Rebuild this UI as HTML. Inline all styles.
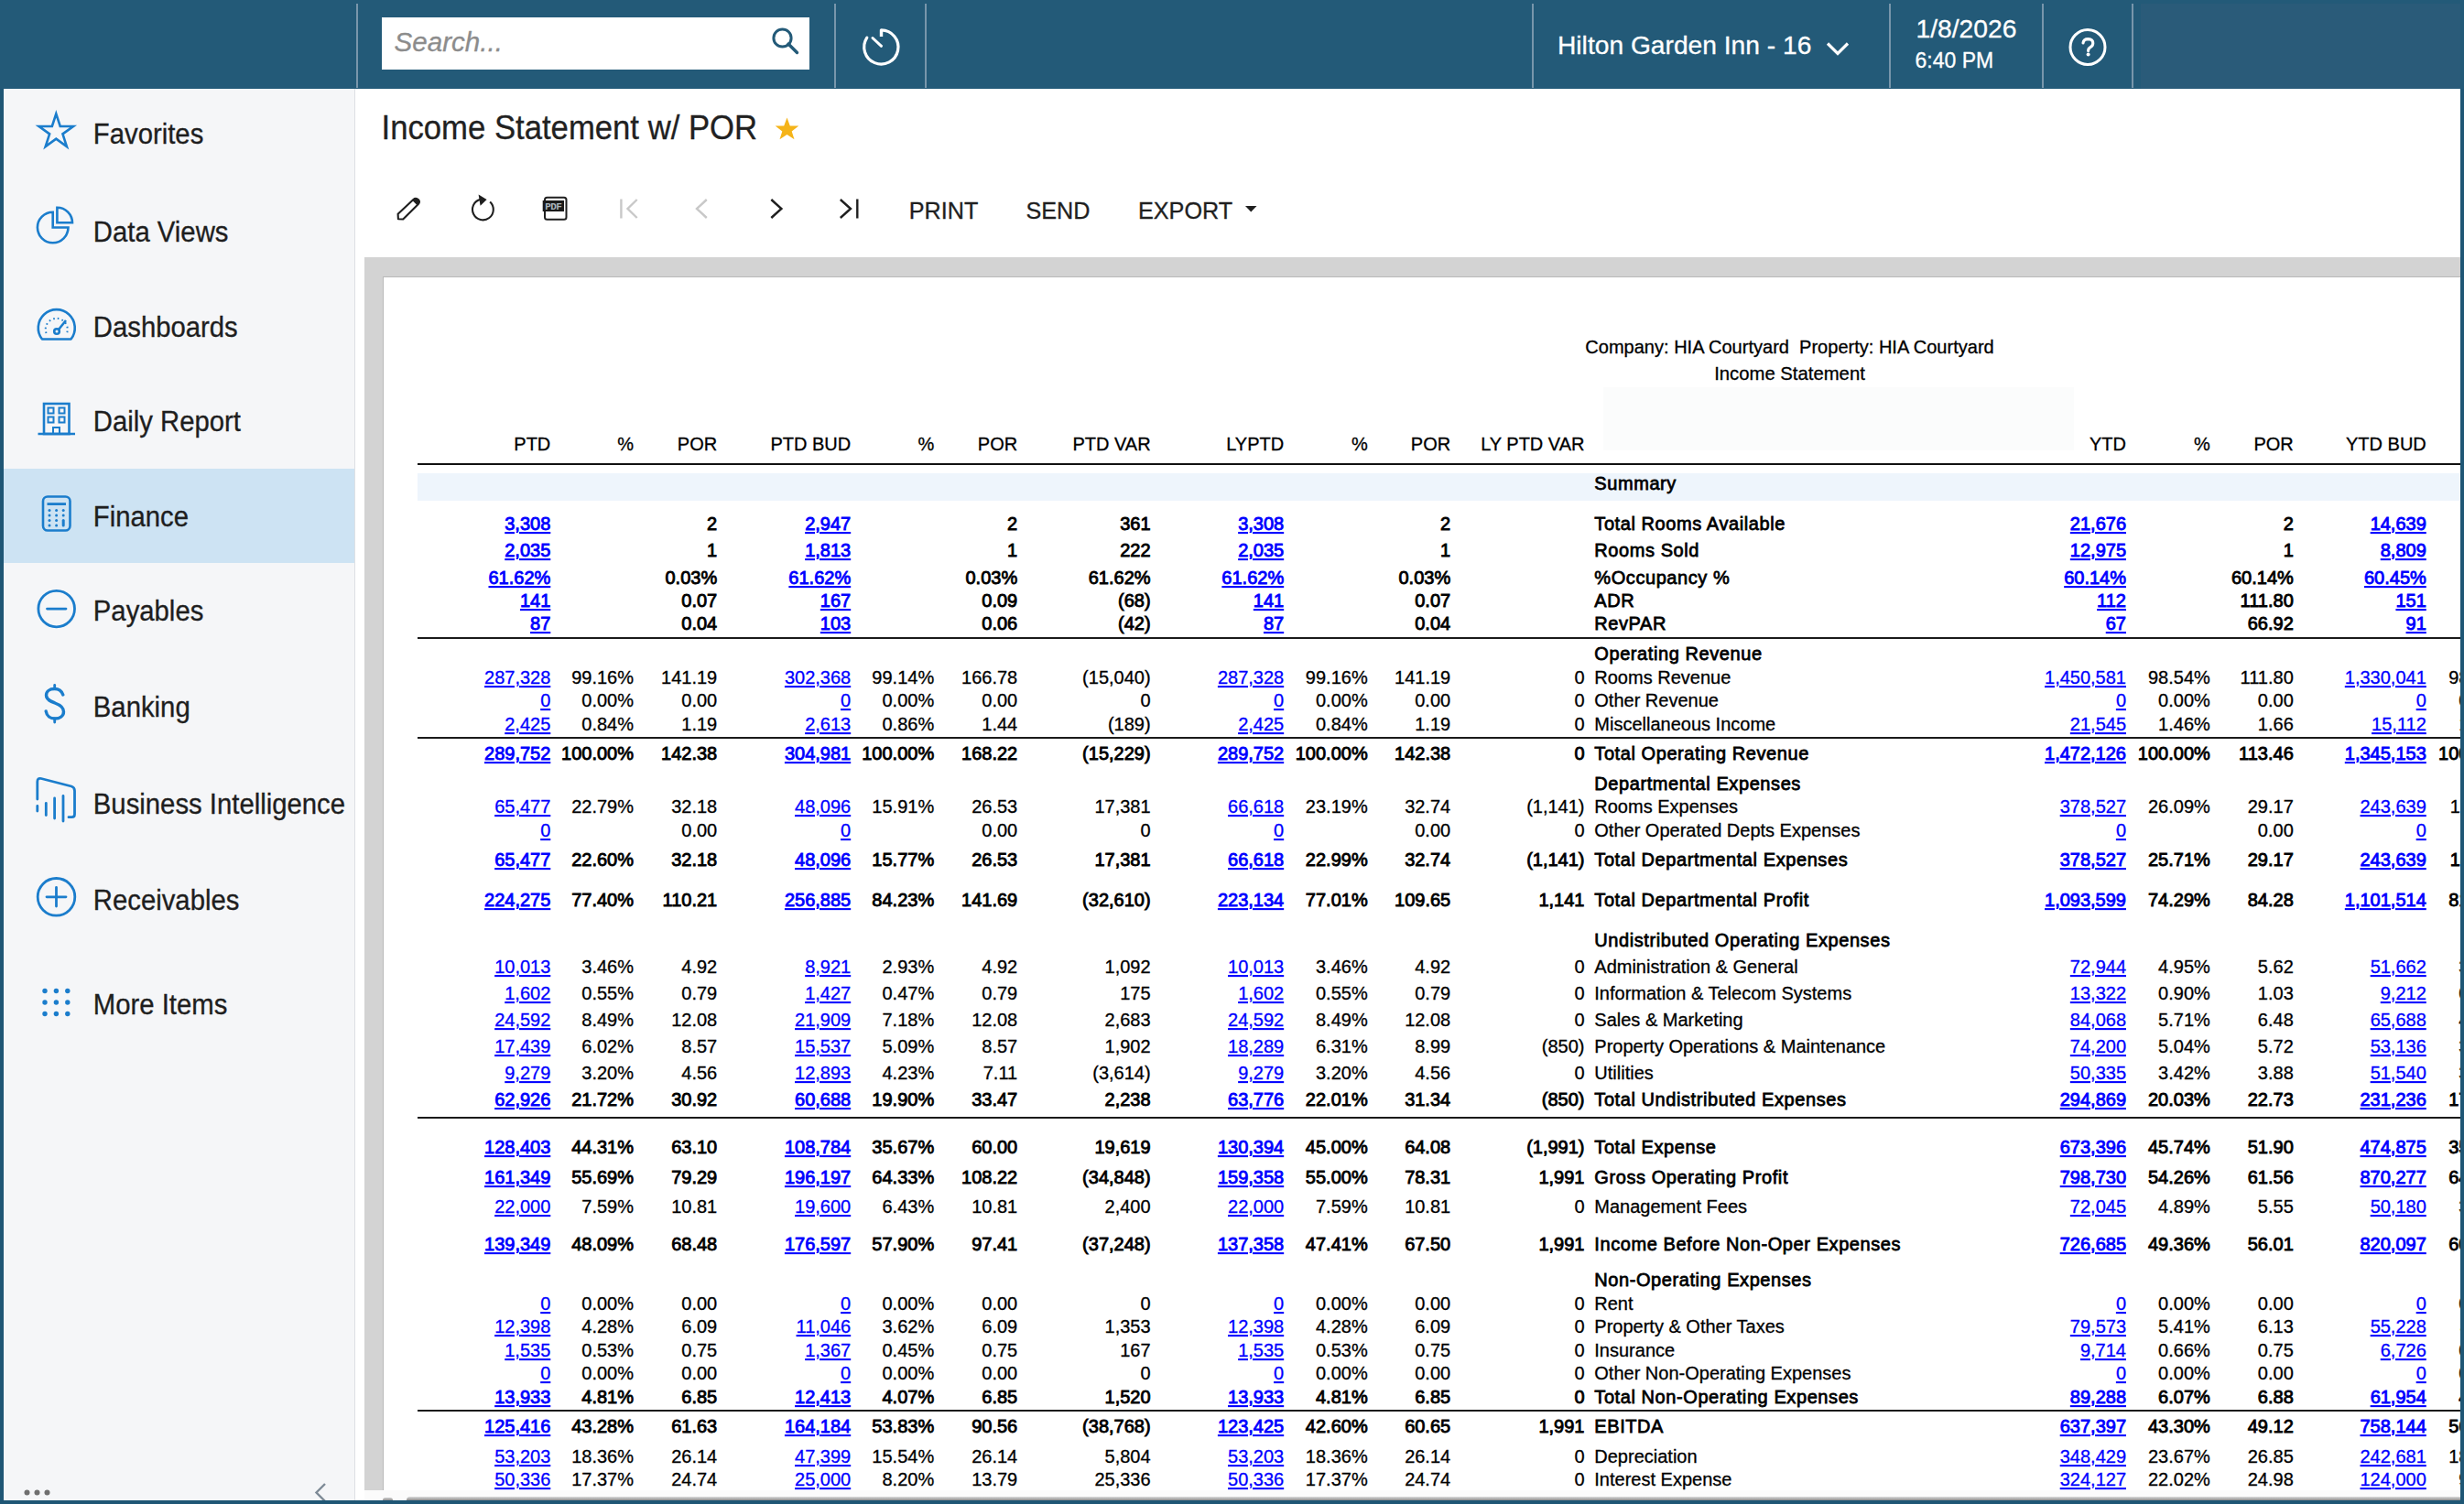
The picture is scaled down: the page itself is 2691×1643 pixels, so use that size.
<!DOCTYPE html><html><head><meta charset="utf-8"><title>Income Statement w/ POR</title><style>*{margin:0;padding:0}
html,body{width:2691px;height:1643px;overflow:hidden;background:#1f5675}
body{position:relative;font-family:"Liberation Sans", sans-serif}
body div, body svg{position:absolute}
body div{line-height:0;white-space:nowrap;-webkit-text-stroke:0.3px currentColor}
.b{-webkit-text-stroke:0}
.sb{font-weight:normal;-webkit-text-stroke:0.85px currentColor}
.sbl{font-weight:normal;-webkit-text-stroke:0.75px currentColor;letter-spacing:0.58px}
u{text-decoration:underline;text-decoration-thickness:1.6px;text-underline-offset:1.5px}
</style></head><body><div style="left:0px;top:0px;width:2691px;height:1643px;background:#1f5675;"></div>
<div style="left:0px;top:0px;width:2691px;height:97px;background:#235a78;"></div>
<div style="left:2338px;top:4px;width:349px;height:93px;background:#2a5b79;"></div>
<div style="left:389px;top:4px;width:2px;height:92px;background:#7896ab;"></div>
<div style="left:911px;top:4px;width:2px;height:92px;background:#7896ab;"></div>
<div style="left:1010px;top:4px;width:2px;height:92px;background:#7896ab;"></div>
<div style="left:1673px;top:4px;width:2px;height:92px;background:#7896ab;"></div>
<div style="left:2063px;top:4px;width:2px;height:92px;background:#7896ab;"></div>
<div style="left:2230px;top:4px;width:2px;height:92px;background:#7896ab;"></div>
<div style="left:2328px;top:4px;width:2px;height:92px;background:#7896ab;"></div>
<div style="left:417px;top:19px;width:467px;height:57px;background:#ffffff;"></div>
<div style="left:430.50px;top:46.24px;font-size:29.6px;color:#8c8c8c;font-style:italic;">Search...</div>
<svg style="left:840px;top:27px" width="36" height="36" viewBox="0 0 36 36"><circle cx="14.5" cy="14.5" r="9.6" fill="none" stroke="#235a78" stroke-width="3"/><line x1="21" y1="21" x2="30.5" y2="30.5" stroke="#235a78" stroke-width="3.4" stroke-linecap="round"/></svg>
<svg style="left:935.5px;top:25px" width="52" height="52" viewBox="0 0 52 52"><path d="M26.5 7.8 A18.6 18.6 0 1 1 10.8 16.2" fill="none" stroke="#ffffff" stroke-width="3.2" stroke-linecap="round"/><line x1="26.5" y1="7.5" x2="26.5" y2="15" stroke="#ffffff" stroke-width="3.4"/><line x1="17" y1="16.5" x2="26.5" y2="25.3" stroke="#ffffff" stroke-width="3" stroke-linecap="round"/></svg>
<div style="left:1701.00px;top:49.43px;font-size:28.2px;color:#ffffff;">Hilton Garden Inn - 16</div>
<svg style="left:1990px;top:40px" width="34" height="26" viewBox="0 0 34 26"><polyline points="6,7.5 17,18.5 28,7.5" fill="none" stroke="#ffffff" stroke-width="3.2"/></svg>
<div style="left:2092.40px;top:31.49px;font-size:28.3px;color:#ffffff;">1/8/2026</div>
<div style="left:2091.50px;top:65.95px;font-size:23px;color:#ffffff;">6:40 PM</div>
<svg style="left:2254px;top:25px" width="52" height="52" viewBox="2254 25 52 52"><circle cx="2280" cy="51.5" r="19" fill="none" stroke="#ffffff" stroke-width="3"/><path d="M2275 47 Q2275.5 42.6 2280.5 42.6 Q2285.8 42.8 2285.8 47.3 Q2285.8 50.2 2282.6 51.8 Q2280.6 52.9 2280.6 55.6" fill="none" stroke="#ffffff" stroke-width="3.1" stroke-linecap="round"/><circle cx="2280.6" cy="59.6" r="2" fill="#ffffff"/></svg>
<div style="left:4px;top:97px;width:383px;height:1542px;background:#f5f6f8;"></div>
<div style="left:387px;top:97px;width:1px;height:1542px;background:#dde0e4;"></div>
<div style="left:4px;top:512px;width:383px;height:103px;background:#cde3f3;"></div>
<div style="left:101.80px;top:146.94px;font-size:29.3px;color:#1e1e1e;transform:scaleY(1.08);transform-origin:0 10.26px;">Favorites</div>
<div style="left:101.80px;top:253.94px;font-size:29.3px;color:#1e1e1e;transform:scaleY(1.08);transform-origin:0 10.26px;">Data Views</div>
<div style="left:101.80px;top:357.75px;font-size:29.3px;color:#1e1e1e;transform:scaleY(1.08);transform-origin:0 10.26px;">Dashboards</div>
<div style="left:101.80px;top:461.05px;font-size:29.3px;color:#1e1e1e;transform:scaleY(1.08);transform-origin:0 10.26px;">Daily Report</div>
<div style="left:101.80px;top:565.14px;font-size:29.3px;color:#1e1e1e;transform:scaleY(1.08);transform-origin:0 10.26px;">Finance</div>
<div style="left:101.80px;top:668.45px;font-size:29.3px;color:#1e1e1e;transform:scaleY(1.08);transform-origin:0 10.26px;">Payables</div>
<div style="left:101.80px;top:773.14px;font-size:29.3px;color:#1e1e1e;transform:scaleY(1.08);transform-origin:0 10.26px;">Banking</div>
<div style="left:101.80px;top:879.14px;font-size:29.3px;color:#1e1e1e;transform:scaleY(1.08);transform-origin:0 10.26px;">Business Intelligence</div>
<div style="left:101.80px;top:983.54px;font-size:29.3px;color:#1e1e1e;transform:scaleY(1.08);transform-origin:0 10.26px;">Receivables</div>
<div style="left:101.80px;top:1098.24px;font-size:29.3px;color:#1e1e1e;transform:scaleY(1.08);transform-origin:0 10.26px;">More Items</div>

<svg style="left:0;top:97px" width="100" height="1050" viewBox="0 97 100 1050">
 <g fill="none" stroke="#1b7dcc" stroke-width="2.6" stroke-linejoin="miter">
  <polygon points="61.3,124.3 65.73,137.94 80.07,137.94 68.47,146.37 72.9,160.0 61.3,151.58 49.7,160.0 54.13,146.37 42.53,137.94 56.87,137.94"/>
  <path d="M57.7 231.7 A16.8 16.8 0 1 0 74.5 248.5 L57.7 248.5 Z"/>
  <path d="M62.4 226.7 A16.6 16.6 0 0 1 79 243.3 L62.4 243.3 Z"/>
  <path d="M46 370.5 A20 20 0 1 1 77.5 370.5 Z" stroke-linejoin="round"/>
  <path d="M50.5 364 A12 12 0 1 1 73 364" stroke-dasharray="1.6 3.2" stroke-width="2"/>
  <circle cx="62" cy="362" r="2.8"/>
  <line x1="64" y1="360" x2="72" y2="350"/>
  <rect x="48" y="441" width="27.5" height="33"/>
  <line x1="41.5" y1="474" x2="82" y2="474"/>
  <rect x="52.5" y="445.5" width="6" height="6" stroke-width="2"/><rect x="64.5" y="445.5" width="6" height="6" stroke-width="2"/>
  <rect x="52.5" y="455.5" width="6" height="6" stroke-width="2"/><rect x="64.5" y="455.5" width="6" height="6" stroke-width="2"/>
  <rect x="58" y="467" width="7" height="7" stroke-width="2"/>
  <rect x="47" y="542.5" width="29.5" height="37" rx="5"/>
 </g>
 <g fill="#1b7dcc">
  <rect x="51.5" y="549.2" width="20.5" height="2.8"/>
  <circle cx="54" cy="557.5" r="1.5"/><circle cx="61.6" cy="557.5" r="1.5"/><circle cx="69.2" cy="557.5" r="1.5"/>
  <circle cx="54" cy="563" r="1.5"/><circle cx="61.6" cy="563" r="1.5"/><circle cx="69.2" cy="563" r="1.5"/>
  <circle cx="54" cy="568.5" r="1.5"/><circle cx="61.6" cy="568.5" r="1.5"/>
  <circle cx="54" cy="574" r="1.5"/><circle cx="61.6" cy="574" r="1.5"/>
  <rect x="67.7" y="567" width="3" height="8.5" rx="1.5"/>
 </g>
 <g fill="none" stroke="#1b7dcc" stroke-width="2.8" stroke-linecap="round">
  <circle cx="61.7" cy="665.1" r="19.8"/>
  <line x1="51.5" y1="665.1" x2="72" y2="665.1"/>
  <path stroke-width="3.4" d="M68.8 759 C67 753.5 62 752.5 59.5 752.5 C54 752.5 50.5 755.5 50.5 759.5 C50.5 764.5 56 766.5 60 768 C65 769.8 69.5 772 69.5 777.5 C69.5 782.5 65 785 60 785 C55 785 51 782 50.2 777"/>
  <line x1="59.7" y1="748.5" x2="59.7" y2="752.5"/><line x1="59.7" y1="785" x2="59.7" y2="789"/>
  <path d="M40.8 873 L40.8 854 Q40.8 849.5 45 850.5 L78 859 Q81.5 860 81.5 864 L81.5 889.5 Q81.5 892.7 78.5 892.7 L75 892.7"/>
  <line x1="40.8" y1="880.5" x2="40.8" y2="886"/>
  <line x1="50.3" y1="877.5" x2="50.3" y2="890.5"/>
  <line x1="59.6" y1="872" x2="59.6" y2="894"/>
  <line x1="69" y1="869.5" x2="69" y2="897"/>
  <circle cx="61.5" cy="979.8" r="20.3"/>
  <line x1="51" y1="979.8" x2="72" y2="979.8"/><line x1="61.5" y1="969.5" x2="61.5" y2="990"/>
 </g>
 <g fill="#1b7dcc">
  <circle cx="49" cy="1082.5" r="2.7"/><circle cx="61.4" cy="1082.5" r="2.7"/><circle cx="73.8" cy="1082.5" r="2.7"/>
  <circle cx="49" cy="1095" r="2.7"/><circle cx="61.4" cy="1095" r="2.7"/><circle cx="73.8" cy="1095" r="2.7"/>
  <circle cx="49" cy="1107.5" r="2.7"/><circle cx="61.4" cy="1107.5" r="2.7"/><circle cx="73.8" cy="1107.5" r="2.7"/>
 </g>
</svg>
<svg style="left:20px;top:1620px" width="345" height="19" viewBox="20 1620 345 19"><g fill="#6f6f6f"><circle cx="29.5" cy="1630.6" r="3"/><circle cx="40.5" cy="1630.6" r="3"/><circle cx="51.5" cy="1630.6" r="3"/></g><polyline points="355,1621 345.5,1630.5 355,1640" fill="none" stroke="#7d8a96" stroke-width="2.4"/></svg>
<div style="left:388px;top:97px;width:2299px;height:1542px;background:#ffffff;"></div>
<div style="left:416.50px;top:139.85px;font-size:34.7px;color:#212121;transform:scaleY(1.05);transform-origin:0 12.15px;">Income Statement w/ POR</div>
<svg style="left:843px;top:124px" width="34" height="32" viewBox="843 124 34 32"><polygon points="859.5,128.5 862.8,137.5 872.3,137.6 864.7,143.4 867.5,152.2 859.5,146.9 851.5,152.2 854.3,143.4 846.7,137.6 856.2,137.5" fill="#f5b419"/></svg>
<svg style="left:420px;top:200px" width="540" height="56" viewBox="420 200 540 56">
 <g fill="none" stroke="#1f1f1f" stroke-width="2.2" stroke-linejoin="round">
  <path d="M434.9 239.2 L434.6 233.7 L451.4 218 Q454.1 215.6 456.7 218.1 Q459.1 220.6 456.8 223.1 L440.2 239.5 Z" stroke-width="2.1"/>
  <path d="M535.17 220.56 A11.4 11.4 0 1 1 524.07 218.0" stroke-width="2.1"/>
  <rect x="595" y="215.7" width="23.5" height="24" rx="2.5" stroke-width="2"/>
 </g>
 <path d="M450.4 219 L452.3 217.1 Q454.5 215.2 457 217.6 Q459.3 220 457.6 222.3 L455.6 224.3 Z" fill="#1f1f1f"/>
 <polygon points="522.6,212.6 531.6,218 524.6,224.8" fill="#1f1f1f"/>
 <rect x="592.7" y="219" width="23.3" height="12" fill="#1a1a1a"/>
 <text x="604.3" y="229.3" font-family="Liberation Mono" font-weight="bold" font-size="11" fill="#a9b4bd" text-anchor="middle" letter-spacing="-0.6">PDF</text>
 <g fill="none" stroke="#c8c8c8" stroke-width="2.4">
  <line x1="678.4" y1="217.5" x2="678.4" y2="238.5"/>
  <polyline points="695.7,218 685.5,228 695.7,238"/>
  <polyline points="771.8,218 761,228 771.8,238"/>
 </g>
 <g fill="none" stroke="#1f1f1f" stroke-width="2.4">
  <polyline points="842.3,218 853.4,228 842.3,238"/>
  <polyline points="917.8,218 929,228 917.8,238"/>
  <line x1="936.3" y1="217.5" x2="936.3" y2="238.5"/>
 </g>
</svg>
<div style="left:992.80px;top:229.78px;font-size:25.2px;color:#1f1f1f;">PRINT</div>
<div style="left:1120.50px;top:229.78px;font-size:25.2px;color:#1f1f1f;">SEND</div>
<div style="left:1243.00px;top:229.78px;font-size:25.2px;color:#1f1f1f;">EXPORT</div>
<svg style="left:1356px;top:220px" width="20" height="16" viewBox="1356 220 20 16"><polygon points="1360,225 1372.5,225 1366.25,231.5" fill="#1f1f1f"/></svg>
<div style="left:398px;top:281px;width:2289px;height:1347px;background:#d3d3d3;"></div>
<div style="left:398px;top:1628px;width:2289px;height:11px;background:#fbfbfb;"></div>
<div style="left:444px;top:1634.5px;width:2243px;height:4.5px;background:linear-gradient(#dcdcdc,#8a8a8a);border-radius:4px 0 0 0;"></div>
<div style="left:418px;top:1636px;width:11px;height:3px;background:linear-gradient(#d0d0d0,#909090);border-radius:5px 5px 0 0;"></div>
<div style="left:418px;top:302px;width:2269px;height:1326px;background:#ffffff;border-left:1px solid #b9b9b9;border-top:1px solid #b9b9b9;box-sizing:border-box;"></div>
<div style="left:419px;top:303px;width:2268px;height:1325px;overflow:hidden;background:transparent">
<div style="left:1332px;top:120px;width:514px;height:69px;background:#fbfcfc;"></div>
<div style="left:735.50px;width:1600px;text-align:center;top:76.48px;font-size:20.05px;color:#000;transform:scaleY(1.035);transform-origin:0 7.02px;">Company: HIA Courtyard&nbsp; Property: HIA Courtyard</div>
<div style="left:735.50px;width:1600px;text-align:center;top:105.20px;font-size:20.3px;color:#000;transform:scaleY(1.035);transform-origin:0 7.10px;">Income Statement</div>
<div style="left:-617.70px;width:800px;text-align:right;top:182.20px;font-size:20.0px;color:#000;transform:scaleY(1.035);transform-origin:0 7.00px;">PTD</div>
<div style="left:-527.00px;width:800px;text-align:right;top:182.20px;font-size:20.0px;color:#000;transform:scaleY(1.035);transform-origin:0 7.00px;">%</div>
<div style="left:-435.80px;width:800px;text-align:right;top:182.20px;font-size:20.0px;color:#000;transform:scaleY(1.035);transform-origin:0 7.00px;">POR</div>
<div style="left:-289.80px;width:800px;text-align:right;top:182.20px;font-size:20.0px;color:#000;transform:scaleY(1.035);transform-origin:0 7.00px;">PTD BUD</div>
<div style="left:-198.80px;width:800px;text-align:right;top:182.20px;font-size:20.0px;color:#000;transform:scaleY(1.035);transform-origin:0 7.00px;">%</div>
<div style="left:-107.80px;width:800px;text-align:right;top:182.20px;font-size:20.0px;color:#000;transform:scaleY(1.035);transform-origin:0 7.00px;">POR</div>
<div style="left:37.60px;width:800px;text-align:right;top:182.20px;font-size:20.0px;color:#000;transform:scaleY(1.035);transform-origin:0 7.00px;">PTD VAR</div>
<div style="left:183.20px;width:800px;text-align:right;top:182.20px;font-size:20.0px;color:#000;transform:scaleY(1.035);transform-origin:0 7.00px;">LYPTD</div>
<div style="left:274.70px;width:800px;text-align:right;top:182.20px;font-size:20.0px;color:#000;transform:scaleY(1.035);transform-origin:0 7.00px;">%</div>
<div style="left:365.20px;width:800px;text-align:right;top:182.20px;font-size:20.0px;color:#000;transform:scaleY(1.035);transform-origin:0 7.00px;">POR</div>
<div style="left:511.50px;width:800px;text-align:right;top:182.20px;font-size:20.0px;color:#000;transform:scaleY(1.035);transform-origin:0 7.00px;">LY PTD VAR</div>
<div style="left:1103.00px;width:800px;text-align:right;top:182.20px;font-size:20.0px;color:#000;transform:scaleY(1.035);transform-origin:0 7.00px;">YTD</div>
<div style="left:1194.80px;width:800px;text-align:right;top:182.20px;font-size:20.0px;color:#000;transform:scaleY(1.035);transform-origin:0 7.00px;">%</div>
<div style="left:1285.80px;width:800px;text-align:right;top:182.20px;font-size:20.0px;color:#000;transform:scaleY(1.035);transform-origin:0 7.00px;">POR</div>
<div style="left:1430.80px;width:800px;text-align:right;top:182.20px;font-size:20.0px;color:#000;transform:scaleY(1.035);transform-origin:0 7.00px;">YTD BUD</div>
<div style="left:1523.00px;width:800px;text-align:right;top:182.20px;font-size:20.0px;color:#000;transform:scaleY(1.035);transform-origin:0 7.00px;">%</div>
<div style="left:36.5px;top:203.3px;width:2232px;height:2px;background:#111;"></div>
<div style="left:36.5px;top:214px;width:2232px;height:29.5px;background:#eef5fc;"></div>
<div class="sbl" style="left:1322.30px;top:224.70px;font-size:20.0px;color:#000;transform:scaleY(1.035);transform-origin:0 6.93px;">Summary</div>
<div class="sb" style="left:-617.70px;width:800px;text-align:right;top:269.00px;font-size:20.0px;color:#0000ff;transform:scaleY(1.035);transform-origin:0 6.93px;"><u>3,308</u></div>
<div class="sb" style="left:-435.80px;width:800px;text-align:right;top:269.00px;font-size:20.0px;color:#000;transform:scaleY(1.035);transform-origin:0 6.93px;">2</div>
<div class="sb" style="left:-289.80px;width:800px;text-align:right;top:269.00px;font-size:20.0px;color:#0000ff;transform:scaleY(1.035);transform-origin:0 6.93px;"><u>2,947</u></div>
<div class="sb" style="left:-107.80px;width:800px;text-align:right;top:269.00px;font-size:20.0px;color:#000;transform:scaleY(1.035);transform-origin:0 6.93px;">2</div>
<div class="sb" style="left:37.60px;width:800px;text-align:right;top:269.00px;font-size:20.0px;color:#000;transform:scaleY(1.035);transform-origin:0 6.93px;">361</div>
<div class="sb" style="left:183.20px;width:800px;text-align:right;top:269.00px;font-size:20.0px;color:#0000ff;transform:scaleY(1.035);transform-origin:0 6.93px;"><u>3,308</u></div>
<div class="sb" style="left:365.20px;width:800px;text-align:right;top:269.00px;font-size:20.0px;color:#000;transform:scaleY(1.035);transform-origin:0 6.93px;">2</div>
<div class="sbl" style="left:1322.30px;top:269.00px;font-size:20.0px;color:#000;transform:scaleY(1.035);transform-origin:0 6.93px;">Total Rooms Available</div>
<div class="sb" style="left:1103.00px;width:800px;text-align:right;top:269.00px;font-size:20.0px;color:#0000ff;transform:scaleY(1.035);transform-origin:0 6.93px;"><u>21,676</u></div>
<div class="sb" style="left:1285.80px;width:800px;text-align:right;top:269.00px;font-size:20.0px;color:#000;transform:scaleY(1.035);transform-origin:0 6.93px;">2</div>
<div class="sb" style="left:1430.80px;width:800px;text-align:right;top:269.00px;font-size:20.0px;color:#0000ff;transform:scaleY(1.035);transform-origin:0 6.93px;"><u>14,639</u></div>
<div class="sb" style="left:-617.70px;width:800px;text-align:right;top:298.40px;font-size:20.0px;color:#0000ff;transform:scaleY(1.035);transform-origin:0 6.93px;"><u>2,035</u></div>
<div class="sb" style="left:-435.80px;width:800px;text-align:right;top:298.40px;font-size:20.0px;color:#000;transform:scaleY(1.035);transform-origin:0 6.93px;">1</div>
<div class="sb" style="left:-289.80px;width:800px;text-align:right;top:298.40px;font-size:20.0px;color:#0000ff;transform:scaleY(1.035);transform-origin:0 6.93px;"><u>1,813</u></div>
<div class="sb" style="left:-107.80px;width:800px;text-align:right;top:298.40px;font-size:20.0px;color:#000;transform:scaleY(1.035);transform-origin:0 6.93px;">1</div>
<div class="sb" style="left:37.60px;width:800px;text-align:right;top:298.40px;font-size:20.0px;color:#000;transform:scaleY(1.035);transform-origin:0 6.93px;">222</div>
<div class="sb" style="left:183.20px;width:800px;text-align:right;top:298.40px;font-size:20.0px;color:#0000ff;transform:scaleY(1.035);transform-origin:0 6.93px;"><u>2,035</u></div>
<div class="sb" style="left:365.20px;width:800px;text-align:right;top:298.40px;font-size:20.0px;color:#000;transform:scaleY(1.035);transform-origin:0 6.93px;">1</div>
<div class="sbl" style="left:1322.30px;top:298.40px;font-size:20.0px;color:#000;transform:scaleY(1.035);transform-origin:0 6.93px;">Rooms Sold</div>
<div class="sb" style="left:1103.00px;width:800px;text-align:right;top:298.40px;font-size:20.0px;color:#0000ff;transform:scaleY(1.035);transform-origin:0 6.93px;"><u>12,975</u></div>
<div class="sb" style="left:1285.80px;width:800px;text-align:right;top:298.40px;font-size:20.0px;color:#000;transform:scaleY(1.035);transform-origin:0 6.93px;">1</div>
<div class="sb" style="left:1430.80px;width:800px;text-align:right;top:298.40px;font-size:20.0px;color:#0000ff;transform:scaleY(1.035);transform-origin:0 6.93px;"><u>8,809</u></div>
<div class="sb" style="left:-617.70px;width:800px;text-align:right;top:327.50px;font-size:20.0px;color:#0000ff;transform:scaleY(1.035);transform-origin:0 6.93px;"><u>61.62%</u></div>
<div class="sb" style="left:-435.80px;width:800px;text-align:right;top:327.50px;font-size:20.0px;color:#000;transform:scaleY(1.035);transform-origin:0 6.93px;">0.03%</div>
<div class="sb" style="left:-289.80px;width:800px;text-align:right;top:327.50px;font-size:20.0px;color:#0000ff;transform:scaleY(1.035);transform-origin:0 6.93px;"><u>61.62%</u></div>
<div class="sb" style="left:-107.80px;width:800px;text-align:right;top:327.50px;font-size:20.0px;color:#000;transform:scaleY(1.035);transform-origin:0 6.93px;">0.03%</div>
<div class="sb" style="left:37.60px;width:800px;text-align:right;top:327.50px;font-size:20.0px;color:#000;transform:scaleY(1.035);transform-origin:0 6.93px;">61.62%</div>
<div class="sb" style="left:183.20px;width:800px;text-align:right;top:327.50px;font-size:20.0px;color:#0000ff;transform:scaleY(1.035);transform-origin:0 6.93px;"><u>61.62%</u></div>
<div class="sb" style="left:365.20px;width:800px;text-align:right;top:327.50px;font-size:20.0px;color:#000;transform:scaleY(1.035);transform-origin:0 6.93px;">0.03%</div>
<div class="sbl" style="left:1322.30px;top:327.50px;font-size:20.0px;color:#000;transform:scaleY(1.035);transform-origin:0 6.93px;">%Occupancy %</div>
<div class="sb" style="left:1103.00px;width:800px;text-align:right;top:327.50px;font-size:20.0px;color:#0000ff;transform:scaleY(1.035);transform-origin:0 6.93px;"><u>60.14%</u></div>
<div class="sb" style="left:1285.80px;width:800px;text-align:right;top:327.50px;font-size:20.0px;color:#000;transform:scaleY(1.035);transform-origin:0 6.93px;">60.14%</div>
<div class="sb" style="left:1430.80px;width:800px;text-align:right;top:327.50px;font-size:20.0px;color:#0000ff;transform:scaleY(1.035);transform-origin:0 6.93px;"><u>60.45%</u></div>
<div class="sb" style="left:-617.70px;width:800px;text-align:right;top:353.00px;font-size:20.0px;color:#0000ff;transform:scaleY(1.035);transform-origin:0 6.93px;"><u>141</u></div>
<div class="sb" style="left:-435.80px;width:800px;text-align:right;top:353.00px;font-size:20.0px;color:#000;transform:scaleY(1.035);transform-origin:0 6.93px;">0.07</div>
<div class="sb" style="left:-289.80px;width:800px;text-align:right;top:353.00px;font-size:20.0px;color:#0000ff;transform:scaleY(1.035);transform-origin:0 6.93px;"><u>167</u></div>
<div class="sb" style="left:-107.80px;width:800px;text-align:right;top:353.00px;font-size:20.0px;color:#000;transform:scaleY(1.035);transform-origin:0 6.93px;">0.09</div>
<div class="sb" style="left:37.60px;width:800px;text-align:right;top:353.00px;font-size:20.0px;color:#000;transform:scaleY(1.035);transform-origin:0 6.93px;">(68)</div>
<div class="sb" style="left:183.20px;width:800px;text-align:right;top:353.00px;font-size:20.0px;color:#0000ff;transform:scaleY(1.035);transform-origin:0 6.93px;"><u>141</u></div>
<div class="sb" style="left:365.20px;width:800px;text-align:right;top:353.00px;font-size:20.0px;color:#000;transform:scaleY(1.035);transform-origin:0 6.93px;">0.07</div>
<div class="sbl" style="left:1322.30px;top:353.00px;font-size:20.0px;color:#000;transform:scaleY(1.035);transform-origin:0 6.93px;">ADR</div>
<div class="sb" style="left:1103.00px;width:800px;text-align:right;top:353.00px;font-size:20.0px;color:#0000ff;transform:scaleY(1.035);transform-origin:0 6.93px;"><u>112</u></div>
<div class="sb" style="left:1285.80px;width:800px;text-align:right;top:353.00px;font-size:20.0px;color:#000;transform:scaleY(1.035);transform-origin:0 6.93px;">111.80</div>
<div class="sb" style="left:1430.80px;width:800px;text-align:right;top:353.00px;font-size:20.0px;color:#0000ff;transform:scaleY(1.035);transform-origin:0 6.93px;"><u>151</u></div>
<div class="sb" style="left:-617.70px;width:800px;text-align:right;top:378.20px;font-size:20.0px;color:#0000ff;transform:scaleY(1.035);transform-origin:0 6.93px;"><u>87</u></div>
<div class="sb" style="left:-435.80px;width:800px;text-align:right;top:378.20px;font-size:20.0px;color:#000;transform:scaleY(1.035);transform-origin:0 6.93px;">0.04</div>
<div class="sb" style="left:-289.80px;width:800px;text-align:right;top:378.20px;font-size:20.0px;color:#0000ff;transform:scaleY(1.035);transform-origin:0 6.93px;"><u>103</u></div>
<div class="sb" style="left:-107.80px;width:800px;text-align:right;top:378.20px;font-size:20.0px;color:#000;transform:scaleY(1.035);transform-origin:0 6.93px;">0.06</div>
<div class="sb" style="left:37.60px;width:800px;text-align:right;top:378.20px;font-size:20.0px;color:#000;transform:scaleY(1.035);transform-origin:0 6.93px;">(42)</div>
<div class="sb" style="left:183.20px;width:800px;text-align:right;top:378.20px;font-size:20.0px;color:#0000ff;transform:scaleY(1.035);transform-origin:0 6.93px;"><u>87</u></div>
<div class="sb" style="left:365.20px;width:800px;text-align:right;top:378.20px;font-size:20.0px;color:#000;transform:scaleY(1.035);transform-origin:0 6.93px;">0.04</div>
<div class="sbl" style="left:1322.30px;top:378.20px;font-size:20.0px;color:#000;transform:scaleY(1.035);transform-origin:0 6.93px;">RevPAR</div>
<div class="sb" style="left:1103.00px;width:800px;text-align:right;top:378.20px;font-size:20.0px;color:#0000ff;transform:scaleY(1.035);transform-origin:0 6.93px;"><u>67</u></div>
<div class="sb" style="left:1285.80px;width:800px;text-align:right;top:378.20px;font-size:20.0px;color:#000;transform:scaleY(1.035);transform-origin:0 6.93px;">66.92</div>
<div class="sb" style="left:1430.80px;width:800px;text-align:right;top:378.20px;font-size:20.0px;color:#0000ff;transform:scaleY(1.035);transform-origin:0 6.93px;"><u>91</u></div>
<div class="sbl" style="left:1322.30px;top:410.70px;font-size:20.0px;color:#000;transform:scaleY(1.035);transform-origin:0 6.93px;">Operating Revenue</div>
<div style="left:-617.70px;width:800px;text-align:right;top:436.50px;font-size:20.0px;color:#0000ff;transform:scaleY(1.035);transform-origin:0 7.00px;"><u>287,328</u></div>
<div style="left:-527.00px;width:800px;text-align:right;top:436.50px;font-size:20.0px;color:#000;transform:scaleY(1.035);transform-origin:0 7.00px;">99.16%</div>
<div style="left:-435.80px;width:800px;text-align:right;top:436.50px;font-size:20.0px;color:#000;transform:scaleY(1.035);transform-origin:0 7.00px;">141.19</div>
<div style="left:-289.80px;width:800px;text-align:right;top:436.50px;font-size:20.0px;color:#0000ff;transform:scaleY(1.035);transform-origin:0 7.00px;"><u>302,368</u></div>
<div style="left:-198.80px;width:800px;text-align:right;top:436.50px;font-size:20.0px;color:#000;transform:scaleY(1.035);transform-origin:0 7.00px;">99.14%</div>
<div style="left:-107.80px;width:800px;text-align:right;top:436.50px;font-size:20.0px;color:#000;transform:scaleY(1.035);transform-origin:0 7.00px;">166.78</div>
<div style="left:37.60px;width:800px;text-align:right;top:436.50px;font-size:20.0px;color:#000;transform:scaleY(1.035);transform-origin:0 7.00px;">(15,040)</div>
<div style="left:183.20px;width:800px;text-align:right;top:436.50px;font-size:20.0px;color:#0000ff;transform:scaleY(1.035);transform-origin:0 7.00px;"><u>287,328</u></div>
<div style="left:274.70px;width:800px;text-align:right;top:436.50px;font-size:20.0px;color:#000;transform:scaleY(1.035);transform-origin:0 7.00px;">99.16%</div>
<div style="left:365.20px;width:800px;text-align:right;top:436.50px;font-size:20.0px;color:#000;transform:scaleY(1.035);transform-origin:0 7.00px;">141.19</div>
<div style="left:511.50px;width:800px;text-align:right;top:436.50px;font-size:20.0px;color:#000;transform:scaleY(1.035);transform-origin:0 7.00px;">0</div>
<div style="left:1322.30px;top:436.50px;font-size:20.0px;color:#000;transform:scaleY(1.035);transform-origin:0 7.00px;">Rooms Revenue</div>
<div style="left:1103.00px;width:800px;text-align:right;top:436.50px;font-size:20.0px;color:#0000ff;transform:scaleY(1.035);transform-origin:0 7.00px;"><u>1,450,581</u></div>
<div style="left:1194.80px;width:800px;text-align:right;top:436.50px;font-size:20.0px;color:#000;transform:scaleY(1.035);transform-origin:0 7.00px;">98.54%</div>
<div style="left:1285.80px;width:800px;text-align:right;top:436.50px;font-size:20.0px;color:#000;transform:scaleY(1.035);transform-origin:0 7.00px;">111.80</div>
<div style="left:1430.80px;width:800px;text-align:right;top:436.50px;font-size:20.0px;color:#0000ff;transform:scaleY(1.035);transform-origin:0 7.00px;"><u>1,330,041</u></div>
<div style="left:1523.00px;width:800px;text-align:right;top:436.50px;font-size:20.0px;color:#000;transform:scaleY(1.035);transform-origin:0 7.00px;">98.88%</div>
<div style="left:-617.70px;width:800px;text-align:right;top:462.00px;font-size:20.0px;color:#0000ff;transform:scaleY(1.035);transform-origin:0 7.00px;"><u>0</u></div>
<div style="left:-527.00px;width:800px;text-align:right;top:462.00px;font-size:20.0px;color:#000;transform:scaleY(1.035);transform-origin:0 7.00px;">0.00%</div>
<div style="left:-435.80px;width:800px;text-align:right;top:462.00px;font-size:20.0px;color:#000;transform:scaleY(1.035);transform-origin:0 7.00px;">0.00</div>
<div style="left:-289.80px;width:800px;text-align:right;top:462.00px;font-size:20.0px;color:#0000ff;transform:scaleY(1.035);transform-origin:0 7.00px;"><u>0</u></div>
<div style="left:-198.80px;width:800px;text-align:right;top:462.00px;font-size:20.0px;color:#000;transform:scaleY(1.035);transform-origin:0 7.00px;">0.00%</div>
<div style="left:-107.80px;width:800px;text-align:right;top:462.00px;font-size:20.0px;color:#000;transform:scaleY(1.035);transform-origin:0 7.00px;">0.00</div>
<div style="left:37.60px;width:800px;text-align:right;top:462.00px;font-size:20.0px;color:#000;transform:scaleY(1.035);transform-origin:0 7.00px;">0</div>
<div style="left:183.20px;width:800px;text-align:right;top:462.00px;font-size:20.0px;color:#0000ff;transform:scaleY(1.035);transform-origin:0 7.00px;"><u>0</u></div>
<div style="left:274.70px;width:800px;text-align:right;top:462.00px;font-size:20.0px;color:#000;transform:scaleY(1.035);transform-origin:0 7.00px;">0.00%</div>
<div style="left:365.20px;width:800px;text-align:right;top:462.00px;font-size:20.0px;color:#000;transform:scaleY(1.035);transform-origin:0 7.00px;">0.00</div>
<div style="left:511.50px;width:800px;text-align:right;top:462.00px;font-size:20.0px;color:#000;transform:scaleY(1.035);transform-origin:0 7.00px;">0</div>
<div style="left:1322.30px;top:462.00px;font-size:20.0px;color:#000;transform:scaleY(1.035);transform-origin:0 7.00px;">Other Revenue</div>
<div style="left:1103.00px;width:800px;text-align:right;top:462.00px;font-size:20.0px;color:#0000ff;transform:scaleY(1.035);transform-origin:0 7.00px;"><u>0</u></div>
<div style="left:1194.80px;width:800px;text-align:right;top:462.00px;font-size:20.0px;color:#000;transform:scaleY(1.035);transform-origin:0 7.00px;">0.00%</div>
<div style="left:1285.80px;width:800px;text-align:right;top:462.00px;font-size:20.0px;color:#000;transform:scaleY(1.035);transform-origin:0 7.00px;">0.00</div>
<div style="left:1430.80px;width:800px;text-align:right;top:462.00px;font-size:20.0px;color:#0000ff;transform:scaleY(1.035);transform-origin:0 7.00px;"><u>0</u></div>
<div style="left:1523.00px;width:800px;text-align:right;top:462.00px;font-size:20.0px;color:#000;transform:scaleY(1.035);transform-origin:0 7.00px;">0.00%</div>
<div style="left:-617.70px;width:800px;text-align:right;top:487.50px;font-size:20.0px;color:#0000ff;transform:scaleY(1.035);transform-origin:0 7.00px;"><u>2,425</u></div>
<div style="left:-527.00px;width:800px;text-align:right;top:487.50px;font-size:20.0px;color:#000;transform:scaleY(1.035);transform-origin:0 7.00px;">0.84%</div>
<div style="left:-435.80px;width:800px;text-align:right;top:487.50px;font-size:20.0px;color:#000;transform:scaleY(1.035);transform-origin:0 7.00px;">1.19</div>
<div style="left:-289.80px;width:800px;text-align:right;top:487.50px;font-size:20.0px;color:#0000ff;transform:scaleY(1.035);transform-origin:0 7.00px;"><u>2,613</u></div>
<div style="left:-198.80px;width:800px;text-align:right;top:487.50px;font-size:20.0px;color:#000;transform:scaleY(1.035);transform-origin:0 7.00px;">0.86%</div>
<div style="left:-107.80px;width:800px;text-align:right;top:487.50px;font-size:20.0px;color:#000;transform:scaleY(1.035);transform-origin:0 7.00px;">1.44</div>
<div style="left:37.60px;width:800px;text-align:right;top:487.50px;font-size:20.0px;color:#000;transform:scaleY(1.035);transform-origin:0 7.00px;">(189)</div>
<div style="left:183.20px;width:800px;text-align:right;top:487.50px;font-size:20.0px;color:#0000ff;transform:scaleY(1.035);transform-origin:0 7.00px;"><u>2,425</u></div>
<div style="left:274.70px;width:800px;text-align:right;top:487.50px;font-size:20.0px;color:#000;transform:scaleY(1.035);transform-origin:0 7.00px;">0.84%</div>
<div style="left:365.20px;width:800px;text-align:right;top:487.50px;font-size:20.0px;color:#000;transform:scaleY(1.035);transform-origin:0 7.00px;">1.19</div>
<div style="left:511.50px;width:800px;text-align:right;top:487.50px;font-size:20.0px;color:#000;transform:scaleY(1.035);transform-origin:0 7.00px;">0</div>
<div style="left:1322.30px;top:487.50px;font-size:20.0px;color:#000;transform:scaleY(1.035);transform-origin:0 7.00px;">Miscellaneous Income</div>
<div style="left:1103.00px;width:800px;text-align:right;top:487.50px;font-size:20.0px;color:#0000ff;transform:scaleY(1.035);transform-origin:0 7.00px;"><u>21,545</u></div>
<div style="left:1194.80px;width:800px;text-align:right;top:487.50px;font-size:20.0px;color:#000;transform:scaleY(1.035);transform-origin:0 7.00px;">1.46%</div>
<div style="left:1285.80px;width:800px;text-align:right;top:487.50px;font-size:20.0px;color:#000;transform:scaleY(1.035);transform-origin:0 7.00px;">1.66</div>
<div style="left:1430.80px;width:800px;text-align:right;top:487.50px;font-size:20.0px;color:#0000ff;transform:scaleY(1.035);transform-origin:0 7.00px;"><u>15,112</u></div>
<div style="left:1523.00px;width:800px;text-align:right;top:487.50px;font-size:20.0px;color:#000;transform:scaleY(1.035);transform-origin:0 7.00px;">1.12%</div>
<div class="sb" style="left:-617.70px;width:800px;text-align:right;top:520.00px;font-size:20.0px;color:#0000ff;transform:scaleY(1.035);transform-origin:0 6.93px;"><u>289,752</u></div>
<div class="sb" style="left:-527.00px;width:800px;text-align:right;top:520.00px;font-size:20.0px;color:#000;transform:scaleY(1.035);transform-origin:0 6.93px;">100.00%</div>
<div class="sb" style="left:-435.80px;width:800px;text-align:right;top:520.00px;font-size:20.0px;color:#000;transform:scaleY(1.035);transform-origin:0 6.93px;">142.38</div>
<div class="sb" style="left:-289.80px;width:800px;text-align:right;top:520.00px;font-size:20.0px;color:#0000ff;transform:scaleY(1.035);transform-origin:0 6.93px;"><u>304,981</u></div>
<div class="sb" style="left:-198.80px;width:800px;text-align:right;top:520.00px;font-size:20.0px;color:#000;transform:scaleY(1.035);transform-origin:0 6.93px;">100.00%</div>
<div class="sb" style="left:-107.80px;width:800px;text-align:right;top:520.00px;font-size:20.0px;color:#000;transform:scaleY(1.035);transform-origin:0 6.93px;">168.22</div>
<div class="sb" style="left:37.60px;width:800px;text-align:right;top:520.00px;font-size:20.0px;color:#000;transform:scaleY(1.035);transform-origin:0 6.93px;">(15,229)</div>
<div class="sb" style="left:183.20px;width:800px;text-align:right;top:520.00px;font-size:20.0px;color:#0000ff;transform:scaleY(1.035);transform-origin:0 6.93px;"><u>289,752</u></div>
<div class="sb" style="left:274.70px;width:800px;text-align:right;top:520.00px;font-size:20.0px;color:#000;transform:scaleY(1.035);transform-origin:0 6.93px;">100.00%</div>
<div class="sb" style="left:365.20px;width:800px;text-align:right;top:520.00px;font-size:20.0px;color:#000;transform:scaleY(1.035);transform-origin:0 6.93px;">142.38</div>
<div class="sb" style="left:511.50px;width:800px;text-align:right;top:520.00px;font-size:20.0px;color:#000;transform:scaleY(1.035);transform-origin:0 6.93px;">0</div>
<div class="sbl" style="left:1322.30px;top:520.00px;font-size:20.0px;color:#000;transform:scaleY(1.035);transform-origin:0 6.93px;">Total Operating Revenue</div>
<div class="sb" style="left:1103.00px;width:800px;text-align:right;top:520.00px;font-size:20.0px;color:#0000ff;transform:scaleY(1.035);transform-origin:0 6.93px;"><u>1,472,126</u></div>
<div class="sb" style="left:1194.80px;width:800px;text-align:right;top:520.00px;font-size:20.0px;color:#000;transform:scaleY(1.035);transform-origin:0 6.93px;">100.00%</div>
<div class="sb" style="left:1285.80px;width:800px;text-align:right;top:520.00px;font-size:20.0px;color:#000;transform:scaleY(1.035);transform-origin:0 6.93px;">113.46</div>
<div class="sb" style="left:1430.80px;width:800px;text-align:right;top:520.00px;font-size:20.0px;color:#0000ff;transform:scaleY(1.035);transform-origin:0 6.93px;"><u>1,345,153</u></div>
<div class="sb" style="left:1523.00px;width:800px;text-align:right;top:520.00px;font-size:20.0px;color:#000;transform:scaleY(1.035);transform-origin:0 6.93px;">100.00%</div>
<div class="sbl" style="left:1322.30px;top:552.50px;font-size:20.0px;color:#000;transform:scaleY(1.035);transform-origin:0 6.93px;">Departmental Expenses</div>
<div style="left:-617.70px;width:800px;text-align:right;top:578.00px;font-size:20.0px;color:#0000ff;transform:scaleY(1.035);transform-origin:0 7.00px;"><u>65,477</u></div>
<div style="left:-527.00px;width:800px;text-align:right;top:578.00px;font-size:20.0px;color:#000;transform:scaleY(1.035);transform-origin:0 7.00px;">22.79%</div>
<div style="left:-435.80px;width:800px;text-align:right;top:578.00px;font-size:20.0px;color:#000;transform:scaleY(1.035);transform-origin:0 7.00px;">32.18</div>
<div style="left:-289.80px;width:800px;text-align:right;top:578.00px;font-size:20.0px;color:#0000ff;transform:scaleY(1.035);transform-origin:0 7.00px;"><u>48,096</u></div>
<div style="left:-198.80px;width:800px;text-align:right;top:578.00px;font-size:20.0px;color:#000;transform:scaleY(1.035);transform-origin:0 7.00px;">15.91%</div>
<div style="left:-107.80px;width:800px;text-align:right;top:578.00px;font-size:20.0px;color:#000;transform:scaleY(1.035);transform-origin:0 7.00px;">26.53</div>
<div style="left:37.60px;width:800px;text-align:right;top:578.00px;font-size:20.0px;color:#000;transform:scaleY(1.035);transform-origin:0 7.00px;">17,381</div>
<div style="left:183.20px;width:800px;text-align:right;top:578.00px;font-size:20.0px;color:#0000ff;transform:scaleY(1.035);transform-origin:0 7.00px;"><u>66,618</u></div>
<div style="left:274.70px;width:800px;text-align:right;top:578.00px;font-size:20.0px;color:#000;transform:scaleY(1.035);transform-origin:0 7.00px;">23.19%</div>
<div style="left:365.20px;width:800px;text-align:right;top:578.00px;font-size:20.0px;color:#000;transform:scaleY(1.035);transform-origin:0 7.00px;">32.74</div>
<div style="left:511.50px;width:800px;text-align:right;top:578.00px;font-size:20.0px;color:#000;transform:scaleY(1.035);transform-origin:0 7.00px;">(1,141)</div>
<div style="left:1322.30px;top:578.00px;font-size:20.0px;color:#000;transform:scaleY(1.035);transform-origin:0 7.00px;">Rooms Expenses</div>
<div style="left:1103.00px;width:800px;text-align:right;top:578.00px;font-size:20.0px;color:#0000ff;transform:scaleY(1.035);transform-origin:0 7.00px;"><u>378,527</u></div>
<div style="left:1194.80px;width:800px;text-align:right;top:578.00px;font-size:20.0px;color:#000;transform:scaleY(1.035);transform-origin:0 7.00px;">26.09%</div>
<div style="left:1285.80px;width:800px;text-align:right;top:578.00px;font-size:20.0px;color:#000;transform:scaleY(1.035);transform-origin:0 7.00px;">29.17</div>
<div style="left:1430.80px;width:800px;text-align:right;top:578.00px;font-size:20.0px;color:#0000ff;transform:scaleY(1.035);transform-origin:0 7.00px;"><u>243,639</u></div>
<div style="left:1523.00px;width:800px;text-align:right;top:578.00px;font-size:20.0px;color:#000;transform:scaleY(1.035);transform-origin:0 7.00px;">18.11%</div>
<div style="left:-617.70px;width:800px;text-align:right;top:603.50px;font-size:20.0px;color:#0000ff;transform:scaleY(1.035);transform-origin:0 7.00px;"><u>0</u></div>
<div style="left:-435.80px;width:800px;text-align:right;top:603.50px;font-size:20.0px;color:#000;transform:scaleY(1.035);transform-origin:0 7.00px;">0.00</div>
<div style="left:-289.80px;width:800px;text-align:right;top:603.50px;font-size:20.0px;color:#0000ff;transform:scaleY(1.035);transform-origin:0 7.00px;"><u>0</u></div>
<div style="left:-107.80px;width:800px;text-align:right;top:603.50px;font-size:20.0px;color:#000;transform:scaleY(1.035);transform-origin:0 7.00px;">0.00</div>
<div style="left:37.60px;width:800px;text-align:right;top:603.50px;font-size:20.0px;color:#000;transform:scaleY(1.035);transform-origin:0 7.00px;">0</div>
<div style="left:183.20px;width:800px;text-align:right;top:603.50px;font-size:20.0px;color:#0000ff;transform:scaleY(1.035);transform-origin:0 7.00px;"><u>0</u></div>
<div style="left:365.20px;width:800px;text-align:right;top:603.50px;font-size:20.0px;color:#000;transform:scaleY(1.035);transform-origin:0 7.00px;">0.00</div>
<div style="left:511.50px;width:800px;text-align:right;top:603.50px;font-size:20.0px;color:#000;transform:scaleY(1.035);transform-origin:0 7.00px;">0</div>
<div style="left:1322.30px;top:603.50px;font-size:20.0px;color:#000;transform:scaleY(1.035);transform-origin:0 7.00px;">Other Operated Depts Expenses</div>
<div style="left:1103.00px;width:800px;text-align:right;top:603.50px;font-size:20.0px;color:#0000ff;transform:scaleY(1.035);transform-origin:0 7.00px;"><u>0</u></div>
<div style="left:1285.80px;width:800px;text-align:right;top:603.50px;font-size:20.0px;color:#000;transform:scaleY(1.035);transform-origin:0 7.00px;">0.00</div>
<div style="left:1430.80px;width:800px;text-align:right;top:603.50px;font-size:20.0px;color:#0000ff;transform:scaleY(1.035);transform-origin:0 7.00px;"><u>0</u></div>
<div class="sb" style="left:-617.70px;width:800px;text-align:right;top:636.30px;font-size:20.0px;color:#0000ff;transform:scaleY(1.035);transform-origin:0 6.93px;"><u>65,477</u></div>
<div class="sb" style="left:-527.00px;width:800px;text-align:right;top:636.30px;font-size:20.0px;color:#000;transform:scaleY(1.035);transform-origin:0 6.93px;">22.60%</div>
<div class="sb" style="left:-435.80px;width:800px;text-align:right;top:636.30px;font-size:20.0px;color:#000;transform:scaleY(1.035);transform-origin:0 6.93px;">32.18</div>
<div class="sb" style="left:-289.80px;width:800px;text-align:right;top:636.30px;font-size:20.0px;color:#0000ff;transform:scaleY(1.035);transform-origin:0 6.93px;"><u>48,096</u></div>
<div class="sb" style="left:-198.80px;width:800px;text-align:right;top:636.30px;font-size:20.0px;color:#000;transform:scaleY(1.035);transform-origin:0 6.93px;">15.77%</div>
<div class="sb" style="left:-107.80px;width:800px;text-align:right;top:636.30px;font-size:20.0px;color:#000;transform:scaleY(1.035);transform-origin:0 6.93px;">26.53</div>
<div class="sb" style="left:37.60px;width:800px;text-align:right;top:636.30px;font-size:20.0px;color:#000;transform:scaleY(1.035);transform-origin:0 6.93px;">17,381</div>
<div class="sb" style="left:183.20px;width:800px;text-align:right;top:636.30px;font-size:20.0px;color:#0000ff;transform:scaleY(1.035);transform-origin:0 6.93px;"><u>66,618</u></div>
<div class="sb" style="left:274.70px;width:800px;text-align:right;top:636.30px;font-size:20.0px;color:#000;transform:scaleY(1.035);transform-origin:0 6.93px;">22.99%</div>
<div class="sb" style="left:365.20px;width:800px;text-align:right;top:636.30px;font-size:20.0px;color:#000;transform:scaleY(1.035);transform-origin:0 6.93px;">32.74</div>
<div class="sb" style="left:511.50px;width:800px;text-align:right;top:636.30px;font-size:20.0px;color:#000;transform:scaleY(1.035);transform-origin:0 6.93px;">(1,141)</div>
<div class="sbl" style="left:1322.30px;top:636.30px;font-size:20.0px;color:#000;transform:scaleY(1.035);transform-origin:0 6.93px;">Total Departmental Expenses</div>
<div class="sb" style="left:1103.00px;width:800px;text-align:right;top:636.30px;font-size:20.0px;color:#0000ff;transform:scaleY(1.035);transform-origin:0 6.93px;"><u>378,527</u></div>
<div class="sb" style="left:1194.80px;width:800px;text-align:right;top:636.30px;font-size:20.0px;color:#000;transform:scaleY(1.035);transform-origin:0 6.93px;">25.71%</div>
<div class="sb" style="left:1285.80px;width:800px;text-align:right;top:636.30px;font-size:20.0px;color:#000;transform:scaleY(1.035);transform-origin:0 6.93px;">29.17</div>
<div class="sb" style="left:1430.80px;width:800px;text-align:right;top:636.30px;font-size:20.0px;color:#0000ff;transform:scaleY(1.035);transform-origin:0 6.93px;"><u>243,639</u></div>
<div class="sb" style="left:1523.00px;width:800px;text-align:right;top:636.30px;font-size:20.0px;color:#000;transform:scaleY(1.035);transform-origin:0 6.93px;">18.11%</div>
<div class="sb" style="left:-617.70px;width:800px;text-align:right;top:680.20px;font-size:20.0px;color:#0000ff;transform:scaleY(1.035);transform-origin:0 6.93px;"><u>224,275</u></div>
<div class="sb" style="left:-527.00px;width:800px;text-align:right;top:680.20px;font-size:20.0px;color:#000;transform:scaleY(1.035);transform-origin:0 6.93px;">77.40%</div>
<div class="sb" style="left:-435.80px;width:800px;text-align:right;top:680.20px;font-size:20.0px;color:#000;transform:scaleY(1.035);transform-origin:0 6.93px;">110.21</div>
<div class="sb" style="left:-289.80px;width:800px;text-align:right;top:680.20px;font-size:20.0px;color:#0000ff;transform:scaleY(1.035);transform-origin:0 6.93px;"><u>256,885</u></div>
<div class="sb" style="left:-198.80px;width:800px;text-align:right;top:680.20px;font-size:20.0px;color:#000;transform:scaleY(1.035);transform-origin:0 6.93px;">84.23%</div>
<div class="sb" style="left:-107.80px;width:800px;text-align:right;top:680.20px;font-size:20.0px;color:#000;transform:scaleY(1.035);transform-origin:0 6.93px;">141.69</div>
<div class="sb" style="left:37.60px;width:800px;text-align:right;top:680.20px;font-size:20.0px;color:#000;transform:scaleY(1.035);transform-origin:0 6.93px;">(32,610)</div>
<div class="sb" style="left:183.20px;width:800px;text-align:right;top:680.20px;font-size:20.0px;color:#0000ff;transform:scaleY(1.035);transform-origin:0 6.93px;"><u>223,134</u></div>
<div class="sb" style="left:274.70px;width:800px;text-align:right;top:680.20px;font-size:20.0px;color:#000;transform:scaleY(1.035);transform-origin:0 6.93px;">77.01%</div>
<div class="sb" style="left:365.20px;width:800px;text-align:right;top:680.20px;font-size:20.0px;color:#000;transform:scaleY(1.035);transform-origin:0 6.93px;">109.65</div>
<div class="sb" style="left:511.50px;width:800px;text-align:right;top:680.20px;font-size:20.0px;color:#000;transform:scaleY(1.035);transform-origin:0 6.93px;">1,141</div>
<div class="sbl" style="left:1322.30px;top:680.20px;font-size:20.0px;color:#000;transform:scaleY(1.035);transform-origin:0 6.93px;">Total Departmental Profit</div>
<div class="sb" style="left:1103.00px;width:800px;text-align:right;top:680.20px;font-size:20.0px;color:#0000ff;transform:scaleY(1.035);transform-origin:0 6.93px;"><u>1,093,599</u></div>
<div class="sb" style="left:1194.80px;width:800px;text-align:right;top:680.20px;font-size:20.0px;color:#000;transform:scaleY(1.035);transform-origin:0 6.93px;">74.29%</div>
<div class="sb" style="left:1285.80px;width:800px;text-align:right;top:680.20px;font-size:20.0px;color:#000;transform:scaleY(1.035);transform-origin:0 6.93px;">84.28</div>
<div class="sb" style="left:1430.80px;width:800px;text-align:right;top:680.20px;font-size:20.0px;color:#0000ff;transform:scaleY(1.035);transform-origin:0 6.93px;"><u>1,101,514</u></div>
<div class="sb" style="left:1523.00px;width:800px;text-align:right;top:680.20px;font-size:20.0px;color:#000;transform:scaleY(1.035);transform-origin:0 6.93px;">81.89%</div>
<div class="sbl" style="left:1322.30px;top:723.50px;font-size:20.0px;color:#000;transform:scaleY(1.035);transform-origin:0 6.93px;">Undistributed Operating Expenses</div>
<div style="left:-617.70px;width:800px;text-align:right;top:752.70px;font-size:20.0px;color:#0000ff;transform:scaleY(1.035);transform-origin:0 7.00px;"><u>10,013</u></div>
<div style="left:-527.00px;width:800px;text-align:right;top:752.70px;font-size:20.0px;color:#000;transform:scaleY(1.035);transform-origin:0 7.00px;">3.46%</div>
<div style="left:-435.80px;width:800px;text-align:right;top:752.70px;font-size:20.0px;color:#000;transform:scaleY(1.035);transform-origin:0 7.00px;">4.92</div>
<div style="left:-289.80px;width:800px;text-align:right;top:752.70px;font-size:20.0px;color:#0000ff;transform:scaleY(1.035);transform-origin:0 7.00px;"><u>8,921</u></div>
<div style="left:-198.80px;width:800px;text-align:right;top:752.70px;font-size:20.0px;color:#000;transform:scaleY(1.035);transform-origin:0 7.00px;">2.93%</div>
<div style="left:-107.80px;width:800px;text-align:right;top:752.70px;font-size:20.0px;color:#000;transform:scaleY(1.035);transform-origin:0 7.00px;">4.92</div>
<div style="left:37.60px;width:800px;text-align:right;top:752.70px;font-size:20.0px;color:#000;transform:scaleY(1.035);transform-origin:0 7.00px;">1,092</div>
<div style="left:183.20px;width:800px;text-align:right;top:752.70px;font-size:20.0px;color:#0000ff;transform:scaleY(1.035);transform-origin:0 7.00px;"><u>10,013</u></div>
<div style="left:274.70px;width:800px;text-align:right;top:752.70px;font-size:20.0px;color:#000;transform:scaleY(1.035);transform-origin:0 7.00px;">3.46%</div>
<div style="left:365.20px;width:800px;text-align:right;top:752.70px;font-size:20.0px;color:#000;transform:scaleY(1.035);transform-origin:0 7.00px;">4.92</div>
<div style="left:511.50px;width:800px;text-align:right;top:752.70px;font-size:20.0px;color:#000;transform:scaleY(1.035);transform-origin:0 7.00px;">0</div>
<div style="left:1322.30px;top:752.70px;font-size:20.0px;color:#000;transform:scaleY(1.035);transform-origin:0 7.00px;">Administration &amp; General</div>
<div style="left:1103.00px;width:800px;text-align:right;top:752.70px;font-size:20.0px;color:#0000ff;transform:scaleY(1.035);transform-origin:0 7.00px;"><u>72,944</u></div>
<div style="left:1194.80px;width:800px;text-align:right;top:752.70px;font-size:20.0px;color:#000;transform:scaleY(1.035);transform-origin:0 7.00px;">4.95%</div>
<div style="left:1285.80px;width:800px;text-align:right;top:752.70px;font-size:20.0px;color:#000;transform:scaleY(1.035);transform-origin:0 7.00px;">5.62</div>
<div style="left:1430.80px;width:800px;text-align:right;top:752.70px;font-size:20.0px;color:#0000ff;transform:scaleY(1.035);transform-origin:0 7.00px;"><u>51,662</u></div>
<div style="left:1523.00px;width:800px;text-align:right;top:752.70px;font-size:20.0px;color:#000;transform:scaleY(1.035);transform-origin:0 7.00px;">3.84%</div>
<div style="left:-617.70px;width:800px;text-align:right;top:781.80px;font-size:20.0px;color:#0000ff;transform:scaleY(1.035);transform-origin:0 7.00px;"><u>1,602</u></div>
<div style="left:-527.00px;width:800px;text-align:right;top:781.80px;font-size:20.0px;color:#000;transform:scaleY(1.035);transform-origin:0 7.00px;">0.55%</div>
<div style="left:-435.80px;width:800px;text-align:right;top:781.80px;font-size:20.0px;color:#000;transform:scaleY(1.035);transform-origin:0 7.00px;">0.79</div>
<div style="left:-289.80px;width:800px;text-align:right;top:781.80px;font-size:20.0px;color:#0000ff;transform:scaleY(1.035);transform-origin:0 7.00px;"><u>1,427</u></div>
<div style="left:-198.80px;width:800px;text-align:right;top:781.80px;font-size:20.0px;color:#000;transform:scaleY(1.035);transform-origin:0 7.00px;">0.47%</div>
<div style="left:-107.80px;width:800px;text-align:right;top:781.80px;font-size:20.0px;color:#000;transform:scaleY(1.035);transform-origin:0 7.00px;">0.79</div>
<div style="left:37.60px;width:800px;text-align:right;top:781.80px;font-size:20.0px;color:#000;transform:scaleY(1.035);transform-origin:0 7.00px;">175</div>
<div style="left:183.20px;width:800px;text-align:right;top:781.80px;font-size:20.0px;color:#0000ff;transform:scaleY(1.035);transform-origin:0 7.00px;"><u>1,602</u></div>
<div style="left:274.70px;width:800px;text-align:right;top:781.80px;font-size:20.0px;color:#000;transform:scaleY(1.035);transform-origin:0 7.00px;">0.55%</div>
<div style="left:365.20px;width:800px;text-align:right;top:781.80px;font-size:20.0px;color:#000;transform:scaleY(1.035);transform-origin:0 7.00px;">0.79</div>
<div style="left:511.50px;width:800px;text-align:right;top:781.80px;font-size:20.0px;color:#000;transform:scaleY(1.035);transform-origin:0 7.00px;">0</div>
<div style="left:1322.30px;top:781.80px;font-size:20.0px;color:#000;transform:scaleY(1.035);transform-origin:0 7.00px;">Information &amp; Telecom Systems</div>
<div style="left:1103.00px;width:800px;text-align:right;top:781.80px;font-size:20.0px;color:#0000ff;transform:scaleY(1.035);transform-origin:0 7.00px;"><u>13,322</u></div>
<div style="left:1194.80px;width:800px;text-align:right;top:781.80px;font-size:20.0px;color:#000;transform:scaleY(1.035);transform-origin:0 7.00px;">0.90%</div>
<div style="left:1285.80px;width:800px;text-align:right;top:781.80px;font-size:20.0px;color:#000;transform:scaleY(1.035);transform-origin:0 7.00px;">1.03</div>
<div style="left:1430.80px;width:800px;text-align:right;top:781.80px;font-size:20.0px;color:#0000ff;transform:scaleY(1.035);transform-origin:0 7.00px;"><u>9,212</u></div>
<div style="left:1523.00px;width:800px;text-align:right;top:781.80px;font-size:20.0px;color:#000;transform:scaleY(1.035);transform-origin:0 7.00px;">0.68%</div>
<div style="left:-617.70px;width:800px;text-align:right;top:810.50px;font-size:20.0px;color:#0000ff;transform:scaleY(1.035);transform-origin:0 7.00px;"><u>24,592</u></div>
<div style="left:-527.00px;width:800px;text-align:right;top:810.50px;font-size:20.0px;color:#000;transform:scaleY(1.035);transform-origin:0 7.00px;">8.49%</div>
<div style="left:-435.80px;width:800px;text-align:right;top:810.50px;font-size:20.0px;color:#000;transform:scaleY(1.035);transform-origin:0 7.00px;">12.08</div>
<div style="left:-289.80px;width:800px;text-align:right;top:810.50px;font-size:20.0px;color:#0000ff;transform:scaleY(1.035);transform-origin:0 7.00px;"><u>21,909</u></div>
<div style="left:-198.80px;width:800px;text-align:right;top:810.50px;font-size:20.0px;color:#000;transform:scaleY(1.035);transform-origin:0 7.00px;">7.18%</div>
<div style="left:-107.80px;width:800px;text-align:right;top:810.50px;font-size:20.0px;color:#000;transform:scaleY(1.035);transform-origin:0 7.00px;">12.08</div>
<div style="left:37.60px;width:800px;text-align:right;top:810.50px;font-size:20.0px;color:#000;transform:scaleY(1.035);transform-origin:0 7.00px;">2,683</div>
<div style="left:183.20px;width:800px;text-align:right;top:810.50px;font-size:20.0px;color:#0000ff;transform:scaleY(1.035);transform-origin:0 7.00px;"><u>24,592</u></div>
<div style="left:274.70px;width:800px;text-align:right;top:810.50px;font-size:20.0px;color:#000;transform:scaleY(1.035);transform-origin:0 7.00px;">8.49%</div>
<div style="left:365.20px;width:800px;text-align:right;top:810.50px;font-size:20.0px;color:#000;transform:scaleY(1.035);transform-origin:0 7.00px;">12.08</div>
<div style="left:511.50px;width:800px;text-align:right;top:810.50px;font-size:20.0px;color:#000;transform:scaleY(1.035);transform-origin:0 7.00px;">0</div>
<div style="left:1322.30px;top:810.50px;font-size:20.0px;color:#000;transform:scaleY(1.035);transform-origin:0 7.00px;">Sales &amp; Marketing</div>
<div style="left:1103.00px;width:800px;text-align:right;top:810.50px;font-size:20.0px;color:#0000ff;transform:scaleY(1.035);transform-origin:0 7.00px;"><u>84,068</u></div>
<div style="left:1194.80px;width:800px;text-align:right;top:810.50px;font-size:20.0px;color:#000;transform:scaleY(1.035);transform-origin:0 7.00px;">5.71%</div>
<div style="left:1285.80px;width:800px;text-align:right;top:810.50px;font-size:20.0px;color:#000;transform:scaleY(1.035);transform-origin:0 7.00px;">6.48</div>
<div style="left:1430.80px;width:800px;text-align:right;top:810.50px;font-size:20.0px;color:#0000ff;transform:scaleY(1.035);transform-origin:0 7.00px;"><u>65,688</u></div>
<div style="left:1523.00px;width:800px;text-align:right;top:810.50px;font-size:20.0px;color:#000;transform:scaleY(1.035);transform-origin:0 7.00px;">4.88%</div>
<div style="left:-617.70px;width:800px;text-align:right;top:839.90px;font-size:20.0px;color:#0000ff;transform:scaleY(1.035);transform-origin:0 7.00px;"><u>17,439</u></div>
<div style="left:-527.00px;width:800px;text-align:right;top:839.90px;font-size:20.0px;color:#000;transform:scaleY(1.035);transform-origin:0 7.00px;">6.02%</div>
<div style="left:-435.80px;width:800px;text-align:right;top:839.90px;font-size:20.0px;color:#000;transform:scaleY(1.035);transform-origin:0 7.00px;">8.57</div>
<div style="left:-289.80px;width:800px;text-align:right;top:839.90px;font-size:20.0px;color:#0000ff;transform:scaleY(1.035);transform-origin:0 7.00px;"><u>15,537</u></div>
<div style="left:-198.80px;width:800px;text-align:right;top:839.90px;font-size:20.0px;color:#000;transform:scaleY(1.035);transform-origin:0 7.00px;">5.09%</div>
<div style="left:-107.80px;width:800px;text-align:right;top:839.90px;font-size:20.0px;color:#000;transform:scaleY(1.035);transform-origin:0 7.00px;">8.57</div>
<div style="left:37.60px;width:800px;text-align:right;top:839.90px;font-size:20.0px;color:#000;transform:scaleY(1.035);transform-origin:0 7.00px;">1,902</div>
<div style="left:183.20px;width:800px;text-align:right;top:839.90px;font-size:20.0px;color:#0000ff;transform:scaleY(1.035);transform-origin:0 7.00px;"><u>18,289</u></div>
<div style="left:274.70px;width:800px;text-align:right;top:839.90px;font-size:20.0px;color:#000;transform:scaleY(1.035);transform-origin:0 7.00px;">6.31%</div>
<div style="left:365.20px;width:800px;text-align:right;top:839.90px;font-size:20.0px;color:#000;transform:scaleY(1.035);transform-origin:0 7.00px;">8.99</div>
<div style="left:511.50px;width:800px;text-align:right;top:839.90px;font-size:20.0px;color:#000;transform:scaleY(1.035);transform-origin:0 7.00px;">(850)</div>
<div style="left:1322.30px;top:839.90px;font-size:20.0px;color:#000;transform:scaleY(1.035);transform-origin:0 7.00px;">Property Operations &amp; Maintenance</div>
<div style="left:1103.00px;width:800px;text-align:right;top:839.90px;font-size:20.0px;color:#0000ff;transform:scaleY(1.035);transform-origin:0 7.00px;"><u>74,200</u></div>
<div style="left:1194.80px;width:800px;text-align:right;top:839.90px;font-size:20.0px;color:#000;transform:scaleY(1.035);transform-origin:0 7.00px;">5.04%</div>
<div style="left:1285.80px;width:800px;text-align:right;top:839.90px;font-size:20.0px;color:#000;transform:scaleY(1.035);transform-origin:0 7.00px;">5.72</div>
<div style="left:1430.80px;width:800px;text-align:right;top:839.90px;font-size:20.0px;color:#0000ff;transform:scaleY(1.035);transform-origin:0 7.00px;"><u>53,136</u></div>
<div style="left:1523.00px;width:800px;text-align:right;top:839.90px;font-size:20.0px;color:#000;transform:scaleY(1.035);transform-origin:0 7.00px;">3.95%</div>
<div style="left:-617.70px;width:800px;text-align:right;top:868.60px;font-size:20.0px;color:#0000ff;transform:scaleY(1.035);transform-origin:0 7.00px;"><u>9,279</u></div>
<div style="left:-527.00px;width:800px;text-align:right;top:868.60px;font-size:20.0px;color:#000;transform:scaleY(1.035);transform-origin:0 7.00px;">3.20%</div>
<div style="left:-435.80px;width:800px;text-align:right;top:868.60px;font-size:20.0px;color:#000;transform:scaleY(1.035);transform-origin:0 7.00px;">4.56</div>
<div style="left:-289.80px;width:800px;text-align:right;top:868.60px;font-size:20.0px;color:#0000ff;transform:scaleY(1.035);transform-origin:0 7.00px;"><u>12,893</u></div>
<div style="left:-198.80px;width:800px;text-align:right;top:868.60px;font-size:20.0px;color:#000;transform:scaleY(1.035);transform-origin:0 7.00px;">4.23%</div>
<div style="left:-107.80px;width:800px;text-align:right;top:868.60px;font-size:20.0px;color:#000;transform:scaleY(1.035);transform-origin:0 7.00px;">7.11</div>
<div style="left:37.60px;width:800px;text-align:right;top:868.60px;font-size:20.0px;color:#000;transform:scaleY(1.035);transform-origin:0 7.00px;">(3,614)</div>
<div style="left:183.20px;width:800px;text-align:right;top:868.60px;font-size:20.0px;color:#0000ff;transform:scaleY(1.035);transform-origin:0 7.00px;"><u>9,279</u></div>
<div style="left:274.70px;width:800px;text-align:right;top:868.60px;font-size:20.0px;color:#000;transform:scaleY(1.035);transform-origin:0 7.00px;">3.20%</div>
<div style="left:365.20px;width:800px;text-align:right;top:868.60px;font-size:20.0px;color:#000;transform:scaleY(1.035);transform-origin:0 7.00px;">4.56</div>
<div style="left:511.50px;width:800px;text-align:right;top:868.60px;font-size:20.0px;color:#000;transform:scaleY(1.035);transform-origin:0 7.00px;">0</div>
<div style="left:1322.30px;top:868.60px;font-size:20.0px;color:#000;transform:scaleY(1.035);transform-origin:0 7.00px;">Utilities</div>
<div style="left:1103.00px;width:800px;text-align:right;top:868.60px;font-size:20.0px;color:#0000ff;transform:scaleY(1.035);transform-origin:0 7.00px;"><u>50,335</u></div>
<div style="left:1194.80px;width:800px;text-align:right;top:868.60px;font-size:20.0px;color:#000;transform:scaleY(1.035);transform-origin:0 7.00px;">3.42%</div>
<div style="left:1285.80px;width:800px;text-align:right;top:868.60px;font-size:20.0px;color:#000;transform:scaleY(1.035);transform-origin:0 7.00px;">3.88</div>
<div style="left:1430.80px;width:800px;text-align:right;top:868.60px;font-size:20.0px;color:#0000ff;transform:scaleY(1.035);transform-origin:0 7.00px;"><u>51,540</u></div>
<div style="left:1523.00px;width:800px;text-align:right;top:868.60px;font-size:20.0px;color:#000;transform:scaleY(1.035);transform-origin:0 7.00px;">3.83%</div>
<div class="sb" style="left:-617.70px;width:800px;text-align:right;top:898.00px;font-size:20.0px;color:#0000ff;transform:scaleY(1.035);transform-origin:0 6.93px;"><u>62,926</u></div>
<div class="sb" style="left:-527.00px;width:800px;text-align:right;top:898.00px;font-size:20.0px;color:#000;transform:scaleY(1.035);transform-origin:0 6.93px;">21.72%</div>
<div class="sb" style="left:-435.80px;width:800px;text-align:right;top:898.00px;font-size:20.0px;color:#000;transform:scaleY(1.035);transform-origin:0 6.93px;">30.92</div>
<div class="sb" style="left:-289.80px;width:800px;text-align:right;top:898.00px;font-size:20.0px;color:#0000ff;transform:scaleY(1.035);transform-origin:0 6.93px;"><u>60,688</u></div>
<div class="sb" style="left:-198.80px;width:800px;text-align:right;top:898.00px;font-size:20.0px;color:#000;transform:scaleY(1.035);transform-origin:0 6.93px;">19.90%</div>
<div class="sb" style="left:-107.80px;width:800px;text-align:right;top:898.00px;font-size:20.0px;color:#000;transform:scaleY(1.035);transform-origin:0 6.93px;">33.47</div>
<div class="sb" style="left:37.60px;width:800px;text-align:right;top:898.00px;font-size:20.0px;color:#000;transform:scaleY(1.035);transform-origin:0 6.93px;">2,238</div>
<div class="sb" style="left:183.20px;width:800px;text-align:right;top:898.00px;font-size:20.0px;color:#0000ff;transform:scaleY(1.035);transform-origin:0 6.93px;"><u>63,776</u></div>
<div class="sb" style="left:274.70px;width:800px;text-align:right;top:898.00px;font-size:20.0px;color:#000;transform:scaleY(1.035);transform-origin:0 6.93px;">22.01%</div>
<div class="sb" style="left:365.20px;width:800px;text-align:right;top:898.00px;font-size:20.0px;color:#000;transform:scaleY(1.035);transform-origin:0 6.93px;">31.34</div>
<div class="sb" style="left:511.50px;width:800px;text-align:right;top:898.00px;font-size:20.0px;color:#000;transform:scaleY(1.035);transform-origin:0 6.93px;">(850)</div>
<div class="sbl" style="left:1322.30px;top:898.00px;font-size:20.0px;color:#000;transform:scaleY(1.035);transform-origin:0 6.93px;">Total Undistributed Expenses</div>
<div class="sb" style="left:1103.00px;width:800px;text-align:right;top:898.00px;font-size:20.0px;color:#0000ff;transform:scaleY(1.035);transform-origin:0 6.93px;"><u>294,869</u></div>
<div class="sb" style="left:1194.80px;width:800px;text-align:right;top:898.00px;font-size:20.0px;color:#000;transform:scaleY(1.035);transform-origin:0 6.93px;">20.03%</div>
<div class="sb" style="left:1285.80px;width:800px;text-align:right;top:898.00px;font-size:20.0px;color:#000;transform:scaleY(1.035);transform-origin:0 6.93px;">22.73</div>
<div class="sb" style="left:1430.80px;width:800px;text-align:right;top:898.00px;font-size:20.0px;color:#0000ff;transform:scaleY(1.035);transform-origin:0 6.93px;"><u>231,236</u></div>
<div class="sb" style="left:1523.00px;width:800px;text-align:right;top:898.00px;font-size:20.0px;color:#000;transform:scaleY(1.035);transform-origin:0 6.93px;">17.19%</div>
<div class="sb" style="left:-617.70px;width:800px;text-align:right;top:949.80px;font-size:20.0px;color:#0000ff;transform:scaleY(1.035);transform-origin:0 6.93px;"><u>128,403</u></div>
<div class="sb" style="left:-527.00px;width:800px;text-align:right;top:949.80px;font-size:20.0px;color:#000;transform:scaleY(1.035);transform-origin:0 6.93px;">44.31%</div>
<div class="sb" style="left:-435.80px;width:800px;text-align:right;top:949.80px;font-size:20.0px;color:#000;transform:scaleY(1.035);transform-origin:0 6.93px;">63.10</div>
<div class="sb" style="left:-289.80px;width:800px;text-align:right;top:949.80px;font-size:20.0px;color:#0000ff;transform:scaleY(1.035);transform-origin:0 6.93px;"><u>108,784</u></div>
<div class="sb" style="left:-198.80px;width:800px;text-align:right;top:949.80px;font-size:20.0px;color:#000;transform:scaleY(1.035);transform-origin:0 6.93px;">35.67%</div>
<div class="sb" style="left:-107.80px;width:800px;text-align:right;top:949.80px;font-size:20.0px;color:#000;transform:scaleY(1.035);transform-origin:0 6.93px;">60.00</div>
<div class="sb" style="left:37.60px;width:800px;text-align:right;top:949.80px;font-size:20.0px;color:#000;transform:scaleY(1.035);transform-origin:0 6.93px;">19,619</div>
<div class="sb" style="left:183.20px;width:800px;text-align:right;top:949.80px;font-size:20.0px;color:#0000ff;transform:scaleY(1.035);transform-origin:0 6.93px;"><u>130,394</u></div>
<div class="sb" style="left:274.70px;width:800px;text-align:right;top:949.80px;font-size:20.0px;color:#000;transform:scaleY(1.035);transform-origin:0 6.93px;">45.00%</div>
<div class="sb" style="left:365.20px;width:800px;text-align:right;top:949.80px;font-size:20.0px;color:#000;transform:scaleY(1.035);transform-origin:0 6.93px;">64.08</div>
<div class="sb" style="left:511.50px;width:800px;text-align:right;top:949.80px;font-size:20.0px;color:#000;transform:scaleY(1.035);transform-origin:0 6.93px;">(1,991)</div>
<div class="sbl" style="left:1322.30px;top:949.80px;font-size:20.0px;color:#000;transform:scaleY(1.035);transform-origin:0 6.93px;">Total Expense</div>
<div class="sb" style="left:1103.00px;width:800px;text-align:right;top:949.80px;font-size:20.0px;color:#0000ff;transform:scaleY(1.035);transform-origin:0 6.93px;"><u>673,396</u></div>
<div class="sb" style="left:1194.80px;width:800px;text-align:right;top:949.80px;font-size:20.0px;color:#000;transform:scaleY(1.035);transform-origin:0 6.93px;">45.74%</div>
<div class="sb" style="left:1285.80px;width:800px;text-align:right;top:949.80px;font-size:20.0px;color:#000;transform:scaleY(1.035);transform-origin:0 6.93px;">51.90</div>
<div class="sb" style="left:1430.80px;width:800px;text-align:right;top:949.80px;font-size:20.0px;color:#0000ff;transform:scaleY(1.035);transform-origin:0 6.93px;"><u>474,875</u></div>
<div class="sb" style="left:1523.00px;width:800px;text-align:right;top:949.80px;font-size:20.0px;color:#000;transform:scaleY(1.035);transform-origin:0 6.93px;">35.30%</div>
<div class="sb" style="left:-617.70px;width:800px;text-align:right;top:982.70px;font-size:20.0px;color:#0000ff;transform:scaleY(1.035);transform-origin:0 6.93px;"><u>161,349</u></div>
<div class="sb" style="left:-527.00px;width:800px;text-align:right;top:982.70px;font-size:20.0px;color:#000;transform:scaleY(1.035);transform-origin:0 6.93px;">55.69%</div>
<div class="sb" style="left:-435.80px;width:800px;text-align:right;top:982.70px;font-size:20.0px;color:#000;transform:scaleY(1.035);transform-origin:0 6.93px;">79.29</div>
<div class="sb" style="left:-289.80px;width:800px;text-align:right;top:982.70px;font-size:20.0px;color:#0000ff;transform:scaleY(1.035);transform-origin:0 6.93px;"><u>196,197</u></div>
<div class="sb" style="left:-198.80px;width:800px;text-align:right;top:982.70px;font-size:20.0px;color:#000;transform:scaleY(1.035);transform-origin:0 6.93px;">64.33%</div>
<div class="sb" style="left:-107.80px;width:800px;text-align:right;top:982.70px;font-size:20.0px;color:#000;transform:scaleY(1.035);transform-origin:0 6.93px;">108.22</div>
<div class="sb" style="left:37.60px;width:800px;text-align:right;top:982.70px;font-size:20.0px;color:#000;transform:scaleY(1.035);transform-origin:0 6.93px;">(34,848)</div>
<div class="sb" style="left:183.20px;width:800px;text-align:right;top:982.70px;font-size:20.0px;color:#0000ff;transform:scaleY(1.035);transform-origin:0 6.93px;"><u>159,358</u></div>
<div class="sb" style="left:274.70px;width:800px;text-align:right;top:982.70px;font-size:20.0px;color:#000;transform:scaleY(1.035);transform-origin:0 6.93px;">55.00%</div>
<div class="sb" style="left:365.20px;width:800px;text-align:right;top:982.70px;font-size:20.0px;color:#000;transform:scaleY(1.035);transform-origin:0 6.93px;">78.31</div>
<div class="sb" style="left:511.50px;width:800px;text-align:right;top:982.70px;font-size:20.0px;color:#000;transform:scaleY(1.035);transform-origin:0 6.93px;">1,991</div>
<div class="sbl" style="left:1322.30px;top:982.70px;font-size:20.0px;color:#000;transform:scaleY(1.035);transform-origin:0 6.93px;">Gross Operating Profit</div>
<div class="sb" style="left:1103.00px;width:800px;text-align:right;top:982.70px;font-size:20.0px;color:#0000ff;transform:scaleY(1.035);transform-origin:0 6.93px;"><u>798,730</u></div>
<div class="sb" style="left:1194.80px;width:800px;text-align:right;top:982.70px;font-size:20.0px;color:#000;transform:scaleY(1.035);transform-origin:0 6.93px;">54.26%</div>
<div class="sb" style="left:1285.80px;width:800px;text-align:right;top:982.70px;font-size:20.0px;color:#000;transform:scaleY(1.035);transform-origin:0 6.93px;">61.56</div>
<div class="sb" style="left:1430.80px;width:800px;text-align:right;top:982.70px;font-size:20.0px;color:#0000ff;transform:scaleY(1.035);transform-origin:0 6.93px;"><u>870,277</u></div>
<div class="sb" style="left:1523.00px;width:800px;text-align:right;top:982.70px;font-size:20.0px;color:#000;transform:scaleY(1.035);transform-origin:0 6.93px;">64.70%</div>
<div style="left:-617.70px;width:800px;text-align:right;top:1015.20px;font-size:20.0px;color:#0000ff;transform:scaleY(1.035);transform-origin:0 7.00px;"><u>22,000</u></div>
<div style="left:-527.00px;width:800px;text-align:right;top:1015.20px;font-size:20.0px;color:#000;transform:scaleY(1.035);transform-origin:0 7.00px;">7.59%</div>
<div style="left:-435.80px;width:800px;text-align:right;top:1015.20px;font-size:20.0px;color:#000;transform:scaleY(1.035);transform-origin:0 7.00px;">10.81</div>
<div style="left:-289.80px;width:800px;text-align:right;top:1015.20px;font-size:20.0px;color:#0000ff;transform:scaleY(1.035);transform-origin:0 7.00px;"><u>19,600</u></div>
<div style="left:-198.80px;width:800px;text-align:right;top:1015.20px;font-size:20.0px;color:#000;transform:scaleY(1.035);transform-origin:0 7.00px;">6.43%</div>
<div style="left:-107.80px;width:800px;text-align:right;top:1015.20px;font-size:20.0px;color:#000;transform:scaleY(1.035);transform-origin:0 7.00px;">10.81</div>
<div style="left:37.60px;width:800px;text-align:right;top:1015.20px;font-size:20.0px;color:#000;transform:scaleY(1.035);transform-origin:0 7.00px;">2,400</div>
<div style="left:183.20px;width:800px;text-align:right;top:1015.20px;font-size:20.0px;color:#0000ff;transform:scaleY(1.035);transform-origin:0 7.00px;"><u>22,000</u></div>
<div style="left:274.70px;width:800px;text-align:right;top:1015.20px;font-size:20.0px;color:#000;transform:scaleY(1.035);transform-origin:0 7.00px;">7.59%</div>
<div style="left:365.20px;width:800px;text-align:right;top:1015.20px;font-size:20.0px;color:#000;transform:scaleY(1.035);transform-origin:0 7.00px;">10.81</div>
<div style="left:511.50px;width:800px;text-align:right;top:1015.20px;font-size:20.0px;color:#000;transform:scaleY(1.035);transform-origin:0 7.00px;">0</div>
<div style="left:1322.30px;top:1015.20px;font-size:20.0px;color:#000;transform:scaleY(1.035);transform-origin:0 7.00px;">Management Fees</div>
<div style="left:1103.00px;width:800px;text-align:right;top:1015.20px;font-size:20.0px;color:#0000ff;transform:scaleY(1.035);transform-origin:0 7.00px;"><u>72,045</u></div>
<div style="left:1194.80px;width:800px;text-align:right;top:1015.20px;font-size:20.0px;color:#000;transform:scaleY(1.035);transform-origin:0 7.00px;">4.89%</div>
<div style="left:1285.80px;width:800px;text-align:right;top:1015.20px;font-size:20.0px;color:#000;transform:scaleY(1.035);transform-origin:0 7.00px;">5.55</div>
<div style="left:1430.80px;width:800px;text-align:right;top:1015.20px;font-size:20.0px;color:#0000ff;transform:scaleY(1.035);transform-origin:0 7.00px;"><u>50,180</u></div>
<div style="left:1523.00px;width:800px;text-align:right;top:1015.20px;font-size:20.0px;color:#000;transform:scaleY(1.035);transform-origin:0 7.00px;">3.73%</div>
<div class="sb" style="left:-617.70px;width:800px;text-align:right;top:1055.80px;font-size:20.0px;color:#0000ff;transform:scaleY(1.035);transform-origin:0 6.93px;"><u>139,349</u></div>
<div class="sb" style="left:-527.00px;width:800px;text-align:right;top:1055.80px;font-size:20.0px;color:#000;transform:scaleY(1.035);transform-origin:0 6.93px;">48.09%</div>
<div class="sb" style="left:-435.80px;width:800px;text-align:right;top:1055.80px;font-size:20.0px;color:#000;transform:scaleY(1.035);transform-origin:0 6.93px;">68.48</div>
<div class="sb" style="left:-289.80px;width:800px;text-align:right;top:1055.80px;font-size:20.0px;color:#0000ff;transform:scaleY(1.035);transform-origin:0 6.93px;"><u>176,597</u></div>
<div class="sb" style="left:-198.80px;width:800px;text-align:right;top:1055.80px;font-size:20.0px;color:#000;transform:scaleY(1.035);transform-origin:0 6.93px;">57.90%</div>
<div class="sb" style="left:-107.80px;width:800px;text-align:right;top:1055.80px;font-size:20.0px;color:#000;transform:scaleY(1.035);transform-origin:0 6.93px;">97.41</div>
<div class="sb" style="left:37.60px;width:800px;text-align:right;top:1055.80px;font-size:20.0px;color:#000;transform:scaleY(1.035);transform-origin:0 6.93px;">(37,248)</div>
<div class="sb" style="left:183.20px;width:800px;text-align:right;top:1055.80px;font-size:20.0px;color:#0000ff;transform:scaleY(1.035);transform-origin:0 6.93px;"><u>137,358</u></div>
<div class="sb" style="left:274.70px;width:800px;text-align:right;top:1055.80px;font-size:20.0px;color:#000;transform:scaleY(1.035);transform-origin:0 6.93px;">47.41%</div>
<div class="sb" style="left:365.20px;width:800px;text-align:right;top:1055.80px;font-size:20.0px;color:#000;transform:scaleY(1.035);transform-origin:0 6.93px;">67.50</div>
<div class="sb" style="left:511.50px;width:800px;text-align:right;top:1055.80px;font-size:20.0px;color:#000;transform:scaleY(1.035);transform-origin:0 6.93px;">1,991</div>
<div class="sbl" style="left:1322.30px;top:1055.80px;font-size:20.0px;color:#000;transform:scaleY(1.035);transform-origin:0 6.93px;">Income Before Non-Oper Expenses</div>
<div class="sb" style="left:1103.00px;width:800px;text-align:right;top:1055.80px;font-size:20.0px;color:#0000ff;transform:scaleY(1.035);transform-origin:0 6.93px;"><u>726,685</u></div>
<div class="sb" style="left:1194.80px;width:800px;text-align:right;top:1055.80px;font-size:20.0px;color:#000;transform:scaleY(1.035);transform-origin:0 6.93px;">49.36%</div>
<div class="sb" style="left:1285.80px;width:800px;text-align:right;top:1055.80px;font-size:20.0px;color:#000;transform:scaleY(1.035);transform-origin:0 6.93px;">56.01</div>
<div class="sb" style="left:1430.80px;width:800px;text-align:right;top:1055.80px;font-size:20.0px;color:#0000ff;transform:scaleY(1.035);transform-origin:0 6.93px;"><u>820,097</u></div>
<div class="sb" style="left:1523.00px;width:800px;text-align:right;top:1055.80px;font-size:20.0px;color:#000;transform:scaleY(1.035);transform-origin:0 6.93px;">60.97%</div>
<div class="sbl" style="left:1322.30px;top:1095.00px;font-size:20.0px;color:#000;transform:scaleY(1.035);transform-origin:0 6.93px;">Non-Operating Expenses</div>
<div style="left:-617.70px;width:800px;text-align:right;top:1120.70px;font-size:20.0px;color:#0000ff;transform:scaleY(1.035);transform-origin:0 7.00px;"><u>0</u></div>
<div style="left:-527.00px;width:800px;text-align:right;top:1120.70px;font-size:20.0px;color:#000;transform:scaleY(1.035);transform-origin:0 7.00px;">0.00%</div>
<div style="left:-435.80px;width:800px;text-align:right;top:1120.70px;font-size:20.0px;color:#000;transform:scaleY(1.035);transform-origin:0 7.00px;">0.00</div>
<div style="left:-289.80px;width:800px;text-align:right;top:1120.70px;font-size:20.0px;color:#0000ff;transform:scaleY(1.035);transform-origin:0 7.00px;"><u>0</u></div>
<div style="left:-198.80px;width:800px;text-align:right;top:1120.70px;font-size:20.0px;color:#000;transform:scaleY(1.035);transform-origin:0 7.00px;">0.00%</div>
<div style="left:-107.80px;width:800px;text-align:right;top:1120.70px;font-size:20.0px;color:#000;transform:scaleY(1.035);transform-origin:0 7.00px;">0.00</div>
<div style="left:37.60px;width:800px;text-align:right;top:1120.70px;font-size:20.0px;color:#000;transform:scaleY(1.035);transform-origin:0 7.00px;">0</div>
<div style="left:183.20px;width:800px;text-align:right;top:1120.70px;font-size:20.0px;color:#0000ff;transform:scaleY(1.035);transform-origin:0 7.00px;"><u>0</u></div>
<div style="left:274.70px;width:800px;text-align:right;top:1120.70px;font-size:20.0px;color:#000;transform:scaleY(1.035);transform-origin:0 7.00px;">0.00%</div>
<div style="left:365.20px;width:800px;text-align:right;top:1120.70px;font-size:20.0px;color:#000;transform:scaleY(1.035);transform-origin:0 7.00px;">0.00</div>
<div style="left:511.50px;width:800px;text-align:right;top:1120.70px;font-size:20.0px;color:#000;transform:scaleY(1.035);transform-origin:0 7.00px;">0</div>
<div style="left:1322.30px;top:1120.70px;font-size:20.0px;color:#000;transform:scaleY(1.035);transform-origin:0 7.00px;">Rent</div>
<div style="left:1103.00px;width:800px;text-align:right;top:1120.70px;font-size:20.0px;color:#0000ff;transform:scaleY(1.035);transform-origin:0 7.00px;"><u>0</u></div>
<div style="left:1194.80px;width:800px;text-align:right;top:1120.70px;font-size:20.0px;color:#000;transform:scaleY(1.035);transform-origin:0 7.00px;">0.00%</div>
<div style="left:1285.80px;width:800px;text-align:right;top:1120.70px;font-size:20.0px;color:#000;transform:scaleY(1.035);transform-origin:0 7.00px;">0.00</div>
<div style="left:1430.80px;width:800px;text-align:right;top:1120.70px;font-size:20.0px;color:#0000ff;transform:scaleY(1.035);transform-origin:0 7.00px;"><u>0</u></div>
<div style="left:1523.00px;width:800px;text-align:right;top:1120.70px;font-size:20.0px;color:#000;transform:scaleY(1.035);transform-origin:0 7.00px;">0.00%</div>
<div style="left:-617.70px;width:800px;text-align:right;top:1146.20px;font-size:20.0px;color:#0000ff;transform:scaleY(1.035);transform-origin:0 7.00px;"><u>12,398</u></div>
<div style="left:-527.00px;width:800px;text-align:right;top:1146.20px;font-size:20.0px;color:#000;transform:scaleY(1.035);transform-origin:0 7.00px;">4.28%</div>
<div style="left:-435.80px;width:800px;text-align:right;top:1146.20px;font-size:20.0px;color:#000;transform:scaleY(1.035);transform-origin:0 7.00px;">6.09</div>
<div style="left:-289.80px;width:800px;text-align:right;top:1146.20px;font-size:20.0px;color:#0000ff;transform:scaleY(1.035);transform-origin:0 7.00px;"><u>11,046</u></div>
<div style="left:-198.80px;width:800px;text-align:right;top:1146.20px;font-size:20.0px;color:#000;transform:scaleY(1.035);transform-origin:0 7.00px;">3.62%</div>
<div style="left:-107.80px;width:800px;text-align:right;top:1146.20px;font-size:20.0px;color:#000;transform:scaleY(1.035);transform-origin:0 7.00px;">6.09</div>
<div style="left:37.60px;width:800px;text-align:right;top:1146.20px;font-size:20.0px;color:#000;transform:scaleY(1.035);transform-origin:0 7.00px;">1,353</div>
<div style="left:183.20px;width:800px;text-align:right;top:1146.20px;font-size:20.0px;color:#0000ff;transform:scaleY(1.035);transform-origin:0 7.00px;"><u>12,398</u></div>
<div style="left:274.70px;width:800px;text-align:right;top:1146.20px;font-size:20.0px;color:#000;transform:scaleY(1.035);transform-origin:0 7.00px;">4.28%</div>
<div style="left:365.20px;width:800px;text-align:right;top:1146.20px;font-size:20.0px;color:#000;transform:scaleY(1.035);transform-origin:0 7.00px;">6.09</div>
<div style="left:511.50px;width:800px;text-align:right;top:1146.20px;font-size:20.0px;color:#000;transform:scaleY(1.035);transform-origin:0 7.00px;">0</div>
<div style="left:1322.30px;top:1146.20px;font-size:20.0px;color:#000;transform:scaleY(1.035);transform-origin:0 7.00px;">Property &amp; Other Taxes</div>
<div style="left:1103.00px;width:800px;text-align:right;top:1146.20px;font-size:20.0px;color:#0000ff;transform:scaleY(1.035);transform-origin:0 7.00px;"><u>79,573</u></div>
<div style="left:1194.80px;width:800px;text-align:right;top:1146.20px;font-size:20.0px;color:#000;transform:scaleY(1.035);transform-origin:0 7.00px;">5.41%</div>
<div style="left:1285.80px;width:800px;text-align:right;top:1146.20px;font-size:20.0px;color:#000;transform:scaleY(1.035);transform-origin:0 7.00px;">6.13</div>
<div style="left:1430.80px;width:800px;text-align:right;top:1146.20px;font-size:20.0px;color:#0000ff;transform:scaleY(1.035);transform-origin:0 7.00px;"><u>55,228</u></div>
<div style="left:1523.00px;width:800px;text-align:right;top:1146.20px;font-size:20.0px;color:#000;transform:scaleY(1.035);transform-origin:0 7.00px;">4.11%</div>
<div style="left:-617.70px;width:800px;text-align:right;top:1171.50px;font-size:20.0px;color:#0000ff;transform:scaleY(1.035);transform-origin:0 7.00px;"><u>1,535</u></div>
<div style="left:-527.00px;width:800px;text-align:right;top:1171.50px;font-size:20.0px;color:#000;transform:scaleY(1.035);transform-origin:0 7.00px;">0.53%</div>
<div style="left:-435.80px;width:800px;text-align:right;top:1171.50px;font-size:20.0px;color:#000;transform:scaleY(1.035);transform-origin:0 7.00px;">0.75</div>
<div style="left:-289.80px;width:800px;text-align:right;top:1171.50px;font-size:20.0px;color:#0000ff;transform:scaleY(1.035);transform-origin:0 7.00px;"><u>1,367</u></div>
<div style="left:-198.80px;width:800px;text-align:right;top:1171.50px;font-size:20.0px;color:#000;transform:scaleY(1.035);transform-origin:0 7.00px;">0.45%</div>
<div style="left:-107.80px;width:800px;text-align:right;top:1171.50px;font-size:20.0px;color:#000;transform:scaleY(1.035);transform-origin:0 7.00px;">0.75</div>
<div style="left:37.60px;width:800px;text-align:right;top:1171.50px;font-size:20.0px;color:#000;transform:scaleY(1.035);transform-origin:0 7.00px;">167</div>
<div style="left:183.20px;width:800px;text-align:right;top:1171.50px;font-size:20.0px;color:#0000ff;transform:scaleY(1.035);transform-origin:0 7.00px;"><u>1,535</u></div>
<div style="left:274.70px;width:800px;text-align:right;top:1171.50px;font-size:20.0px;color:#000;transform:scaleY(1.035);transform-origin:0 7.00px;">0.53%</div>
<div style="left:365.20px;width:800px;text-align:right;top:1171.50px;font-size:20.0px;color:#000;transform:scaleY(1.035);transform-origin:0 7.00px;">0.75</div>
<div style="left:511.50px;width:800px;text-align:right;top:1171.50px;font-size:20.0px;color:#000;transform:scaleY(1.035);transform-origin:0 7.00px;">0</div>
<div style="left:1322.30px;top:1171.50px;font-size:20.0px;color:#000;transform:scaleY(1.035);transform-origin:0 7.00px;">Insurance</div>
<div style="left:1103.00px;width:800px;text-align:right;top:1171.50px;font-size:20.0px;color:#0000ff;transform:scaleY(1.035);transform-origin:0 7.00px;"><u>9,714</u></div>
<div style="left:1194.80px;width:800px;text-align:right;top:1171.50px;font-size:20.0px;color:#000;transform:scaleY(1.035);transform-origin:0 7.00px;">0.66%</div>
<div style="left:1285.80px;width:800px;text-align:right;top:1171.50px;font-size:20.0px;color:#000;transform:scaleY(1.035);transform-origin:0 7.00px;">0.75</div>
<div style="left:1430.80px;width:800px;text-align:right;top:1171.50px;font-size:20.0px;color:#0000ff;transform:scaleY(1.035);transform-origin:0 7.00px;"><u>6,726</u></div>
<div style="left:1523.00px;width:800px;text-align:right;top:1171.50px;font-size:20.0px;color:#000;transform:scaleY(1.035);transform-origin:0 7.00px;">0.50%</div>
<div style="left:-617.70px;width:800px;text-align:right;top:1197.00px;font-size:20.0px;color:#0000ff;transform:scaleY(1.035);transform-origin:0 7.00px;"><u>0</u></div>
<div style="left:-527.00px;width:800px;text-align:right;top:1197.00px;font-size:20.0px;color:#000;transform:scaleY(1.035);transform-origin:0 7.00px;">0.00%</div>
<div style="left:-435.80px;width:800px;text-align:right;top:1197.00px;font-size:20.0px;color:#000;transform:scaleY(1.035);transform-origin:0 7.00px;">0.00</div>
<div style="left:-289.80px;width:800px;text-align:right;top:1197.00px;font-size:20.0px;color:#0000ff;transform:scaleY(1.035);transform-origin:0 7.00px;"><u>0</u></div>
<div style="left:-198.80px;width:800px;text-align:right;top:1197.00px;font-size:20.0px;color:#000;transform:scaleY(1.035);transform-origin:0 7.00px;">0.00%</div>
<div style="left:-107.80px;width:800px;text-align:right;top:1197.00px;font-size:20.0px;color:#000;transform:scaleY(1.035);transform-origin:0 7.00px;">0.00</div>
<div style="left:37.60px;width:800px;text-align:right;top:1197.00px;font-size:20.0px;color:#000;transform:scaleY(1.035);transform-origin:0 7.00px;">0</div>
<div style="left:183.20px;width:800px;text-align:right;top:1197.00px;font-size:20.0px;color:#0000ff;transform:scaleY(1.035);transform-origin:0 7.00px;"><u>0</u></div>
<div style="left:274.70px;width:800px;text-align:right;top:1197.00px;font-size:20.0px;color:#000;transform:scaleY(1.035);transform-origin:0 7.00px;">0.00%</div>
<div style="left:365.20px;width:800px;text-align:right;top:1197.00px;font-size:20.0px;color:#000;transform:scaleY(1.035);transform-origin:0 7.00px;">0.00</div>
<div style="left:511.50px;width:800px;text-align:right;top:1197.00px;font-size:20.0px;color:#000;transform:scaleY(1.035);transform-origin:0 7.00px;">0</div>
<div style="left:1322.30px;top:1197.00px;font-size:20.0px;color:#000;transform:scaleY(1.035);transform-origin:0 7.00px;">Other Non-Operating Expenses</div>
<div style="left:1103.00px;width:800px;text-align:right;top:1197.00px;font-size:20.0px;color:#0000ff;transform:scaleY(1.035);transform-origin:0 7.00px;"><u>0</u></div>
<div style="left:1194.80px;width:800px;text-align:right;top:1197.00px;font-size:20.0px;color:#000;transform:scaleY(1.035);transform-origin:0 7.00px;">0.00%</div>
<div style="left:1285.80px;width:800px;text-align:right;top:1197.00px;font-size:20.0px;color:#000;transform:scaleY(1.035);transform-origin:0 7.00px;">0.00</div>
<div style="left:1430.80px;width:800px;text-align:right;top:1197.00px;font-size:20.0px;color:#0000ff;transform:scaleY(1.035);transform-origin:0 7.00px;"><u>0</u></div>
<div style="left:1523.00px;width:800px;text-align:right;top:1197.00px;font-size:20.0px;color:#000;transform:scaleY(1.035);transform-origin:0 7.00px;">0.00%</div>
<div class="sb" style="left:-617.70px;width:800px;text-align:right;top:1222.50px;font-size:20.0px;color:#0000ff;transform:scaleY(1.035);transform-origin:0 6.93px;"><u>13,933</u></div>
<div class="sb" style="left:-527.00px;width:800px;text-align:right;top:1222.50px;font-size:20.0px;color:#000;transform:scaleY(1.035);transform-origin:0 6.93px;">4.81%</div>
<div class="sb" style="left:-435.80px;width:800px;text-align:right;top:1222.50px;font-size:20.0px;color:#000;transform:scaleY(1.035);transform-origin:0 6.93px;">6.85</div>
<div class="sb" style="left:-289.80px;width:800px;text-align:right;top:1222.50px;font-size:20.0px;color:#0000ff;transform:scaleY(1.035);transform-origin:0 6.93px;"><u>12,413</u></div>
<div class="sb" style="left:-198.80px;width:800px;text-align:right;top:1222.50px;font-size:20.0px;color:#000;transform:scaleY(1.035);transform-origin:0 6.93px;">4.07%</div>
<div class="sb" style="left:-107.80px;width:800px;text-align:right;top:1222.50px;font-size:20.0px;color:#000;transform:scaleY(1.035);transform-origin:0 6.93px;">6.85</div>
<div class="sb" style="left:37.60px;width:800px;text-align:right;top:1222.50px;font-size:20.0px;color:#000;transform:scaleY(1.035);transform-origin:0 6.93px;">1,520</div>
<div class="sb" style="left:183.20px;width:800px;text-align:right;top:1222.50px;font-size:20.0px;color:#0000ff;transform:scaleY(1.035);transform-origin:0 6.93px;"><u>13,933</u></div>
<div class="sb" style="left:274.70px;width:800px;text-align:right;top:1222.50px;font-size:20.0px;color:#000;transform:scaleY(1.035);transform-origin:0 6.93px;">4.81%</div>
<div class="sb" style="left:365.20px;width:800px;text-align:right;top:1222.50px;font-size:20.0px;color:#000;transform:scaleY(1.035);transform-origin:0 6.93px;">6.85</div>
<div class="sb" style="left:511.50px;width:800px;text-align:right;top:1222.50px;font-size:20.0px;color:#000;transform:scaleY(1.035);transform-origin:0 6.93px;">0</div>
<div class="sbl" style="left:1322.30px;top:1222.50px;font-size:20.0px;color:#000;transform:scaleY(1.035);transform-origin:0 6.93px;">Total Non-Operating Expenses</div>
<div class="sb" style="left:1103.00px;width:800px;text-align:right;top:1222.50px;font-size:20.0px;color:#0000ff;transform:scaleY(1.035);transform-origin:0 6.93px;"><u>89,288</u></div>
<div class="sb" style="left:1194.80px;width:800px;text-align:right;top:1222.50px;font-size:20.0px;color:#000;transform:scaleY(1.035);transform-origin:0 6.93px;">6.07%</div>
<div class="sb" style="left:1285.80px;width:800px;text-align:right;top:1222.50px;font-size:20.0px;color:#000;transform:scaleY(1.035);transform-origin:0 6.93px;">6.88</div>
<div class="sb" style="left:1430.80px;width:800px;text-align:right;top:1222.50px;font-size:20.0px;color:#0000ff;transform:scaleY(1.035);transform-origin:0 6.93px;"><u>61,954</u></div>
<div class="sb" style="left:1523.00px;width:800px;text-align:right;top:1222.50px;font-size:20.0px;color:#000;transform:scaleY(1.035);transform-origin:0 6.93px;">4.61%</div>
<div class="sb" style="left:-617.70px;width:800px;text-align:right;top:1255.30px;font-size:20.0px;color:#0000ff;transform:scaleY(1.035);transform-origin:0 6.93px;"><u>125,416</u></div>
<div class="sb" style="left:-527.00px;width:800px;text-align:right;top:1255.30px;font-size:20.0px;color:#000;transform:scaleY(1.035);transform-origin:0 6.93px;">43.28%</div>
<div class="sb" style="left:-435.80px;width:800px;text-align:right;top:1255.30px;font-size:20.0px;color:#000;transform:scaleY(1.035);transform-origin:0 6.93px;">61.63</div>
<div class="sb" style="left:-289.80px;width:800px;text-align:right;top:1255.30px;font-size:20.0px;color:#0000ff;transform:scaleY(1.035);transform-origin:0 6.93px;"><u>164,184</u></div>
<div class="sb" style="left:-198.80px;width:800px;text-align:right;top:1255.30px;font-size:20.0px;color:#000;transform:scaleY(1.035);transform-origin:0 6.93px;">53.83%</div>
<div class="sb" style="left:-107.80px;width:800px;text-align:right;top:1255.30px;font-size:20.0px;color:#000;transform:scaleY(1.035);transform-origin:0 6.93px;">90.56</div>
<div class="sb" style="left:37.60px;width:800px;text-align:right;top:1255.30px;font-size:20.0px;color:#000;transform:scaleY(1.035);transform-origin:0 6.93px;">(38,768)</div>
<div class="sb" style="left:183.20px;width:800px;text-align:right;top:1255.30px;font-size:20.0px;color:#0000ff;transform:scaleY(1.035);transform-origin:0 6.93px;"><u>123,425</u></div>
<div class="sb" style="left:274.70px;width:800px;text-align:right;top:1255.30px;font-size:20.0px;color:#000;transform:scaleY(1.035);transform-origin:0 6.93px;">42.60%</div>
<div class="sb" style="left:365.20px;width:800px;text-align:right;top:1255.30px;font-size:20.0px;color:#000;transform:scaleY(1.035);transform-origin:0 6.93px;">60.65</div>
<div class="sb" style="left:511.50px;width:800px;text-align:right;top:1255.30px;font-size:20.0px;color:#000;transform:scaleY(1.035);transform-origin:0 6.93px;">1,991</div>
<div class="sbl" style="left:1322.30px;top:1255.30px;font-size:20.0px;color:#000;transform:scaleY(1.035);transform-origin:0 6.93px;">EBITDA</div>
<div class="sb" style="left:1103.00px;width:800px;text-align:right;top:1255.30px;font-size:20.0px;color:#0000ff;transform:scaleY(1.035);transform-origin:0 6.93px;"><u>637,397</u></div>
<div class="sb" style="left:1194.80px;width:800px;text-align:right;top:1255.30px;font-size:20.0px;color:#000;transform:scaleY(1.035);transform-origin:0 6.93px;">43.30%</div>
<div class="sb" style="left:1285.80px;width:800px;text-align:right;top:1255.30px;font-size:20.0px;color:#000;transform:scaleY(1.035);transform-origin:0 6.93px;">49.12</div>
<div class="sb" style="left:1430.80px;width:800px;text-align:right;top:1255.30px;font-size:20.0px;color:#0000ff;transform:scaleY(1.035);transform-origin:0 6.93px;"><u>758,144</u></div>
<div class="sb" style="left:1523.00px;width:800px;text-align:right;top:1255.30px;font-size:20.0px;color:#000;transform:scaleY(1.035);transform-origin:0 6.93px;">56.36%</div>
<div style="left:-617.70px;width:800px;text-align:right;top:1287.80px;font-size:20.0px;color:#0000ff;transform:scaleY(1.035);transform-origin:0 7.00px;"><u>53,203</u></div>
<div style="left:-527.00px;width:800px;text-align:right;top:1287.80px;font-size:20.0px;color:#000;transform:scaleY(1.035);transform-origin:0 7.00px;">18.36%</div>
<div style="left:-435.80px;width:800px;text-align:right;top:1287.80px;font-size:20.0px;color:#000;transform:scaleY(1.035);transform-origin:0 7.00px;">26.14</div>
<div style="left:-289.80px;width:800px;text-align:right;top:1287.80px;font-size:20.0px;color:#0000ff;transform:scaleY(1.035);transform-origin:0 7.00px;"><u>47,399</u></div>
<div style="left:-198.80px;width:800px;text-align:right;top:1287.80px;font-size:20.0px;color:#000;transform:scaleY(1.035);transform-origin:0 7.00px;">15.54%</div>
<div style="left:-107.80px;width:800px;text-align:right;top:1287.80px;font-size:20.0px;color:#000;transform:scaleY(1.035);transform-origin:0 7.00px;">26.14</div>
<div style="left:37.60px;width:800px;text-align:right;top:1287.80px;font-size:20.0px;color:#000;transform:scaleY(1.035);transform-origin:0 7.00px;">5,804</div>
<div style="left:183.20px;width:800px;text-align:right;top:1287.80px;font-size:20.0px;color:#0000ff;transform:scaleY(1.035);transform-origin:0 7.00px;"><u>53,203</u></div>
<div style="left:274.70px;width:800px;text-align:right;top:1287.80px;font-size:20.0px;color:#000;transform:scaleY(1.035);transform-origin:0 7.00px;">18.36%</div>
<div style="left:365.20px;width:800px;text-align:right;top:1287.80px;font-size:20.0px;color:#000;transform:scaleY(1.035);transform-origin:0 7.00px;">26.14</div>
<div style="left:511.50px;width:800px;text-align:right;top:1287.80px;font-size:20.0px;color:#000;transform:scaleY(1.035);transform-origin:0 7.00px;">0</div>
<div style="left:1322.30px;top:1287.80px;font-size:20.0px;color:#000;transform:scaleY(1.035);transform-origin:0 7.00px;">Depreciation</div>
<div style="left:1103.00px;width:800px;text-align:right;top:1287.80px;font-size:20.0px;color:#0000ff;transform:scaleY(1.035);transform-origin:0 7.00px;"><u>348,429</u></div>
<div style="left:1194.80px;width:800px;text-align:right;top:1287.80px;font-size:20.0px;color:#000;transform:scaleY(1.035);transform-origin:0 7.00px;">23.67%</div>
<div style="left:1285.80px;width:800px;text-align:right;top:1287.80px;font-size:20.0px;color:#000;transform:scaleY(1.035);transform-origin:0 7.00px;">26.85</div>
<div style="left:1430.80px;width:800px;text-align:right;top:1287.80px;font-size:20.0px;color:#0000ff;transform:scaleY(1.035);transform-origin:0 7.00px;"><u>242,681</u></div>
<div style="left:1523.00px;width:800px;text-align:right;top:1287.80px;font-size:20.0px;color:#000;transform:scaleY(1.035);transform-origin:0 7.00px;">18.04%</div>
<div style="left:-617.70px;width:800px;text-align:right;top:1313.20px;font-size:20.0px;color:#0000ff;transform:scaleY(1.035);transform-origin:0 7.00px;"><u>50,336</u></div>
<div style="left:-527.00px;width:800px;text-align:right;top:1313.20px;font-size:20.0px;color:#000;transform:scaleY(1.035);transform-origin:0 7.00px;">17.37%</div>
<div style="left:-435.80px;width:800px;text-align:right;top:1313.20px;font-size:20.0px;color:#000;transform:scaleY(1.035);transform-origin:0 7.00px;">24.74</div>
<div style="left:-289.80px;width:800px;text-align:right;top:1313.20px;font-size:20.0px;color:#0000ff;transform:scaleY(1.035);transform-origin:0 7.00px;"><u>25,000</u></div>
<div style="left:-198.80px;width:800px;text-align:right;top:1313.20px;font-size:20.0px;color:#000;transform:scaleY(1.035);transform-origin:0 7.00px;">8.20%</div>
<div style="left:-107.80px;width:800px;text-align:right;top:1313.20px;font-size:20.0px;color:#000;transform:scaleY(1.035);transform-origin:0 7.00px;">13.79</div>
<div style="left:37.60px;width:800px;text-align:right;top:1313.20px;font-size:20.0px;color:#000;transform:scaleY(1.035);transform-origin:0 7.00px;">25,336</div>
<div style="left:183.20px;width:800px;text-align:right;top:1313.20px;font-size:20.0px;color:#0000ff;transform:scaleY(1.035);transform-origin:0 7.00px;"><u>50,336</u></div>
<div style="left:274.70px;width:800px;text-align:right;top:1313.20px;font-size:20.0px;color:#000;transform:scaleY(1.035);transform-origin:0 7.00px;">17.37%</div>
<div style="left:365.20px;width:800px;text-align:right;top:1313.20px;font-size:20.0px;color:#000;transform:scaleY(1.035);transform-origin:0 7.00px;">24.74</div>
<div style="left:511.50px;width:800px;text-align:right;top:1313.20px;font-size:20.0px;color:#000;transform:scaleY(1.035);transform-origin:0 7.00px;">0</div>
<div style="left:1322.30px;top:1313.20px;font-size:20.0px;color:#000;transform:scaleY(1.035);transform-origin:0 7.00px;">Interest Expense</div>
<div style="left:1103.00px;width:800px;text-align:right;top:1313.20px;font-size:20.0px;color:#0000ff;transform:scaleY(1.035);transform-origin:0 7.00px;"><u>324,127</u></div>
<div style="left:1194.80px;width:800px;text-align:right;top:1313.20px;font-size:20.0px;color:#000;transform:scaleY(1.035);transform-origin:0 7.00px;">22.02%</div>
<div style="left:1285.80px;width:800px;text-align:right;top:1313.20px;font-size:20.0px;color:#000;transform:scaleY(1.035);transform-origin:0 7.00px;">24.98</div>
<div style="left:1430.80px;width:800px;text-align:right;top:1313.20px;font-size:20.0px;color:#0000ff;transform:scaleY(1.035);transform-origin:0 7.00px;"><u>124,000</u></div>
<div style="left:1523.00px;width:800px;text-align:right;top:1313.20px;font-size:20.0px;color:#000;transform:scaleY(1.035);transform-origin:0 7.00px;">9.22%</div>
<div style="left:36.5px;top:392.5px;width:2232px;height:2px;background:#1a1a1a;"></div>
<div style="left:36.5px;top:501.5px;width:2232px;height:2px;background:#1a1a1a;"></div>
<div style="left:36.5px;top:916.5999999999999px;width:2232px;height:2px;background:#1a1a1a;"></div>
<div style="left:36.5px;top:1237.1px;width:2232px;height:2px;background:#1a1a1a;"></div>
</div></body></html>
